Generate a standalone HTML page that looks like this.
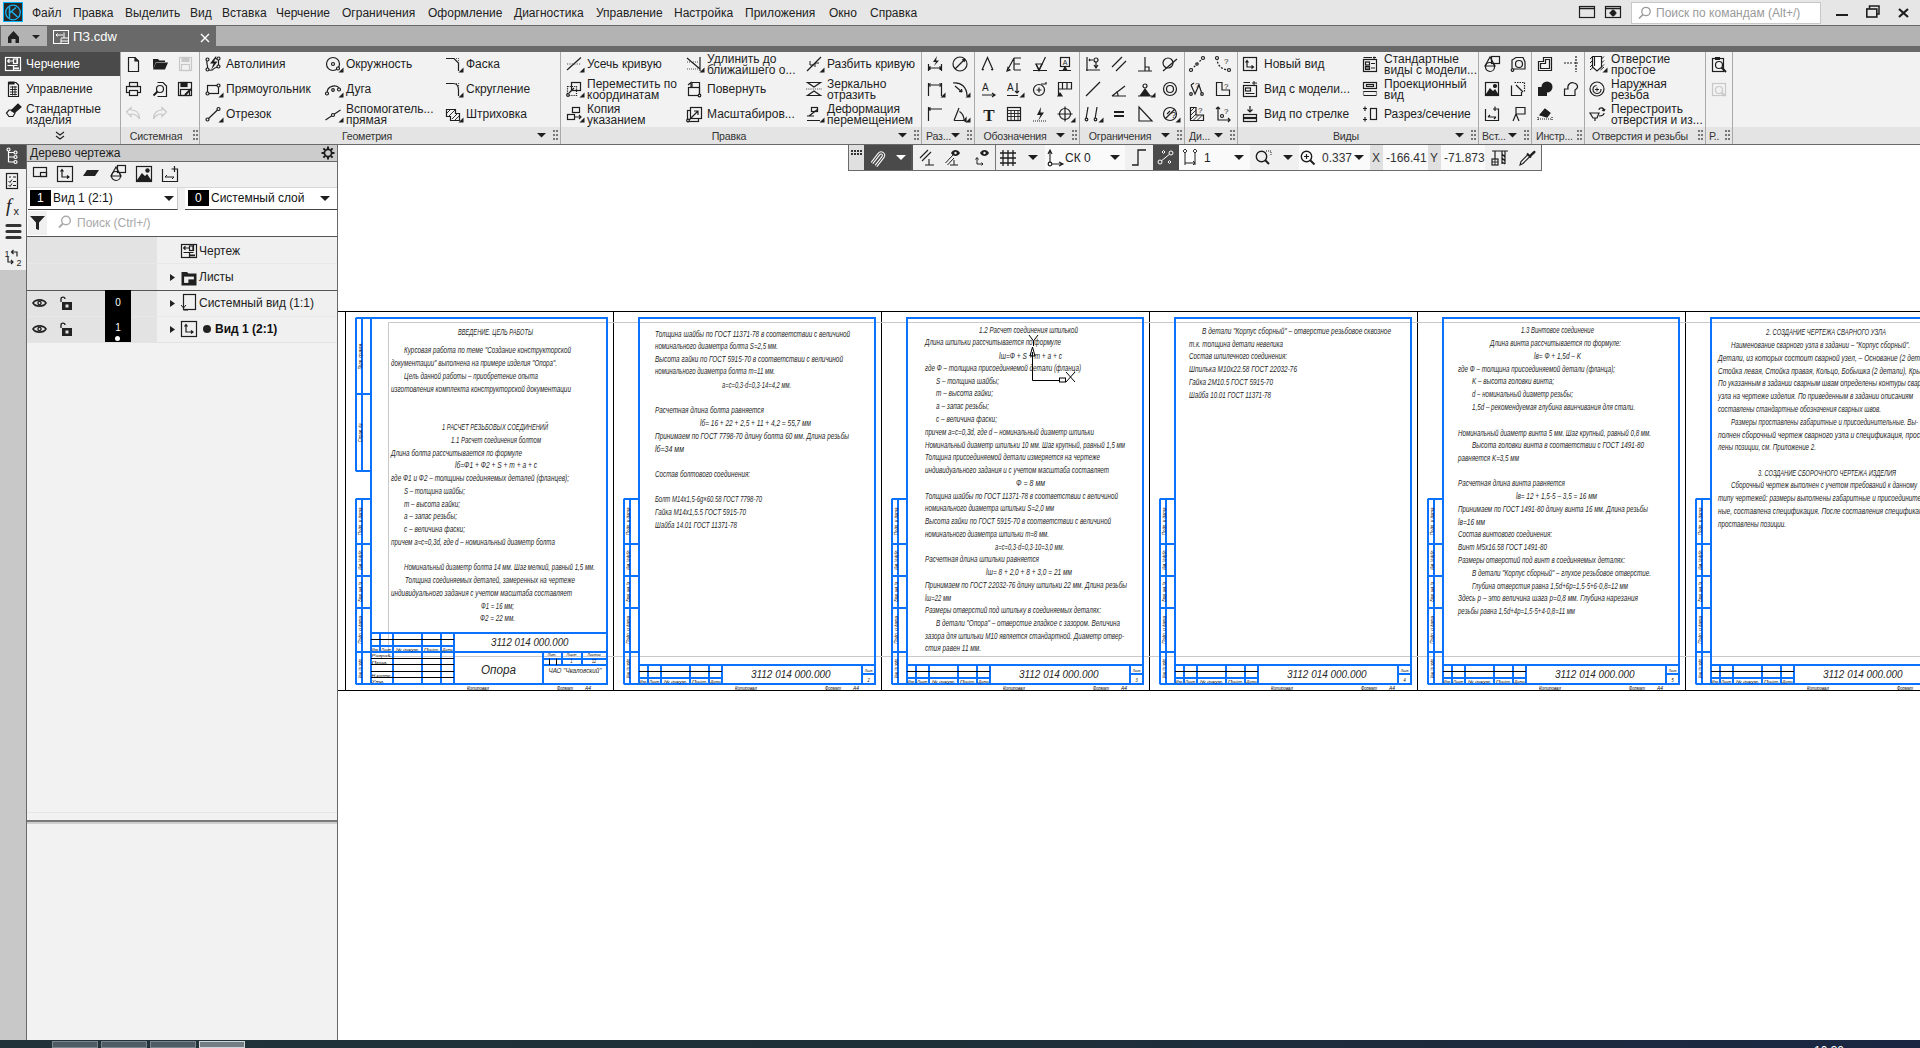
<!DOCTYPE html><html><head><meta charset="utf-8"><title>KOMPAS</title><style>
*{box-sizing:border-box}
html,body{margin:0;padding:0;width:1920px;height:1048px;overflow:hidden;background:#fff;font-family:"Liberation Sans",sans-serif}
.r{position:absolute}
.t{position:absolute;white-space:nowrap;line-height:16px;height:16px}
.i{position:absolute;overflow:visible}
</style></head><body>
<div class="r" style="left:0px;top:0px;width:1920px;height:25px;background:#e6e6e6;"></div>
<svg class="i" style="left:3px;top:2px" width="20" height="20" viewBox="0 0 20 20"><rect x="0" y="0" width="20" height="20" fill="#00b4ff"/><rect x="1" y="1" width="18" height="18" fill="#2b2727"/><circle cx="10" cy="10.5" r="7.3" fill="none" stroke="#18b4f0" stroke-width="1.3"/><path d="M6.5 5 V16 M6.5 11 L13 5.5 M8.5 9.5 L14.5 15" stroke="#18b4f0" stroke-width="1.5" fill="none"/></svg>
<div class="t" style="left:32px;top:5px;font-size:12px;color:#222;font-weight:normal;">Файл</div>
<div class="t" style="left:73px;top:5px;font-size:12px;color:#222;font-weight:normal;">Правка</div>
<div class="t" style="left:125px;top:5px;font-size:12px;color:#222;font-weight:normal;">Выделить</div>
<div class="t" style="left:190px;top:5px;font-size:12px;color:#222;font-weight:normal;">Вид</div>
<div class="t" style="left:222px;top:5px;font-size:12px;color:#222;font-weight:normal;">Вставка</div>
<div class="t" style="left:276px;top:5px;font-size:12px;color:#222;font-weight:normal;">Черчение</div>
<div class="t" style="left:342px;top:5px;font-size:12px;color:#222;font-weight:normal;">Ограничения</div>
<div class="t" style="left:428px;top:5px;font-size:12px;color:#222;font-weight:normal;">Оформление</div>
<div class="t" style="left:514px;top:5px;font-size:12px;color:#222;font-weight:normal;">Диагностика</div>
<div class="t" style="left:596px;top:5px;font-size:12px;color:#222;font-weight:normal;">Управление</div>
<div class="t" style="left:674px;top:5px;font-size:12px;color:#222;font-weight:normal;">Настройка</div>
<div class="t" style="left:745px;top:5px;font-size:12px;color:#222;font-weight:normal;">Приложения</div>
<div class="t" style="left:829px;top:5px;font-size:12px;color:#222;font-weight:normal;">Окно</div>
<div class="t" style="left:870px;top:5px;font-size:12px;color:#222;font-weight:normal;">Справка</div>
<svg class="i" style="left:1579px;top:6px;" width="16" height="12" viewBox="0 0 16 12" fill="none" stroke="#1e1e1e" stroke-width="1.2"><rect x="0.5" y="0.5" width="15" height="11" stroke-width="1.2"/><path d="M0.5 2.5 H15.5" stroke-width="1.5"/></svg>
<svg class="i" style="left:1605px;top:6px;" width="16" height="12" viewBox="0 0 16 12" fill="none" stroke="#1e1e1e" stroke-width="1.2"><rect x="0.5" y="0.5" width="15" height="11" stroke-width="1.2"/><path d="M0.5 2.5 H15.5" stroke-width="1.5"/><circle cx="8" cy="7" r="2.3" fill="#1e1e1e"/><path d="M8 3.5 V10.5 M4.5 7 H11.5" stroke-width="1.3"/></svg>
<div class="r" style="left:1631px;top:2px;width:190px;height:22px;background:#ffffff;border:1px solid #c8c8c8"></div>
<svg class="i" style="left:1638px;top:6px;" width="13" height="14" viewBox="0 0 13 14" fill="none" stroke="#1e1e1e" stroke-width="1.2"><circle cx="8" cy="5.5" r="4.2" stroke="#999" stroke-width="1.3"/><path d="M5 8.5 L1 12.5" stroke="#999" stroke-width="1.6"/></svg>
<div class="t" style="left:1656px;top:5px;font-size:12px;color:#9a9a9a;font-weight:normal;">Поиск по командам (Alt+/)</div>
<div class="r" style="left:1836px;top:14px;width:12px;height:2px;background:#1e1e1e;"></div>
<svg class="i" style="left:1866px;top:5px;" width="14" height="13" viewBox="0 0 14 13" fill="none" stroke="#1e1e1e" stroke-width="1.2"><rect x="0.8" y="4" width="10" height="8" stroke-width="1.6"/><path d="M3.5 4 V1 H13 V9 H11" stroke-width="1.5"/></svg>
<svg class="i" style="left:1898px;top:8px;" width="11" height="10" viewBox="0 0 11 10" fill="none" stroke="#1e1e1e" stroke-width="1.2"><path d="M1 1 L10 9 M10 1 L1 9" stroke-width="2.2"/></svg>
<div class="r" style="left:0px;top:25px;width:1920px;height:27px;background:#696969;"></div>
<div class="r" style="left:216px;top:26px;width:1704px;height:20px;background:#b3b3b3;"></div>
<div class="r" style="left:1px;top:26px;width:46px;height:20px;background:#b3b3b3;"></div>
<svg class="i" style="left:7px;top:30px;" width="13" height="13" viewBox="0 0 13 13" fill="none" stroke="#1e1e1e" stroke-width="1.2"><path d="M1 7 L6.5 1 L12 7 V13 H8.5 V9 H4.5 V13 H1 Z" fill="#222" stroke="none"/></svg>
<svg class="i" style="left:32px;top:35px;" width="8" height="4" viewBox="0 0 8 4" fill="none" stroke="#1e1e1e" stroke-width="1.2"><path d="M0 0 H8 L4 4 Z" fill="#222" stroke="none"/></svg>
<svg class="i" style="left:53px;top:30px;" width="16" height="14" viewBox="0 0 16 14" fill="none" stroke="#1e1e1e" stroke-width="1.2"><rect x="0.5" y="0.5" width="15" height="13" stroke="#fff" stroke-width="1"/><path d="M3 5 H10 M3 5 L4.5 3.5 M3 5 L4.5 6.5 M11 2.5 V8 M8 8 H15 M8 11 H15 M8 8.5 V13.5" stroke="#fff" stroke-width="1"/></svg>
<div class="t" style="left:73px;top:29px;font-size:13px;color:#ffffff;font-weight:normal;">ПЗ.cdw</div>
<svg class="i" style="left:200px;top:33px;" width="10" height="10" viewBox="0 0 10 10" fill="none" stroke="#1e1e1e" stroke-width="1.2"><path d="M1 1 L9 9 M9 1 L1 9" stroke="#fff" stroke-width="1.4"/></svg>
<div class="r" style="left:0px;top:52px;width:1920px;height:75px;background:#f2f2f2;"></div>
<div class="r" style="left:0px;top:127px;width:1920px;height:17px;background:#e4e4e4;"></div>
<div class="r" style="left:0px;top:144px;width:1920px;height:1px;background:#696969;"></div>
<div class="r" style="left:0px;top:52px;width:120px;height:24px;background:#4a4a4a;"></div>
<svg class="i" style="left:5px;top:56px;stroke:#fff" width="16" height="16" viewBox="0 0 16 16" fill="none" stroke="#1e1e1e" stroke-width="1.2"><rect x="0.5" y="1.5" width="15" height="13"/><path d="M2.5 5 H8 M2.5 5 L4.5 3.2 M2.5 5 L4.5 6.8"/><rect x="8.5" y="3" width="3.5" height="4.5"/><path d="M12.5 2 V8 M2.5 9.5 H12.5 M8.5 9.5 V14"/><rect x="9" y="11.5" width="5" height="1.8" fill="#fff" stroke="none"/></svg>
<div class="t" style="left:26px;top:56px;font-size:12px;color:#ffffff;font-weight:normal;">Черчение</div>
<svg class="i" style="left:5px;top:81px;" width="16" height="16" viewBox="0 0 16 16" fill="none" stroke="#1e1e1e" stroke-width="1.2"><path d="M3.5 1.5 H11 L13.5 4 V15.5 H3.5 Z"/><path d="M5 6 H12 M5 8.5 H12 M5 11 H12 M5 13.5 H12 M7.5 5 V14.5 M10 5 V14.5" stroke-width="0.9"/><path d="M4 1 H9 V3 H4 Z" fill="#1e1e1e"/></svg>
<div class="t" style="left:26px;top:81px;font-size:12px;color:#1e1e1e;font-weight:normal;">Управление</div>
<svg class="i" style="left:5px;top:102px;" width="16" height="16" viewBox="0 0 16 16" fill="none" stroke="#1e1e1e" stroke-width="1.2"><path d="M1.5 11 L4 8 H8 L10 11 L8 14.5 H4 Z" fill="#f2f2f2"/><path d="M6 9 L13 2 L16 5 L9 11" fill="#1e1e1e"/></svg>
<div class="t" style="left:26px;top:101px;font-size:12px;color:#1e1e1e;font-weight:normal;">Стандартные</div>
<div class="t" style="left:26px;top:112px;font-size:12px;color:#1e1e1e;font-weight:normal;">изделия</div>
<svg class="i" style="left:55px;top:131px;" width="10" height="9" viewBox="0 0 10 9" fill="none" stroke="#1e1e1e" stroke-width="1.2"><path d="M1 1 L5 4 L9 1 M1 5 L5 8 L9 5" stroke-width="1.1"/></svg>
<div class="r" style="left:120px;top:52px;width:1px;height:92px;background:#a9a9a9;"></div>
<div class="r" style="left:199px;top:52px;width:1px;height:92px;background:#a9a9a9;"></div>
<div class="r" style="left:560px;top:52px;width:1px;height:92px;background:#a9a9a9;"></div>
<div class="r" style="left:921px;top:52px;width:1px;height:92px;background:#a9a9a9;"></div>
<div class="r" style="left:974px;top:52px;width:1px;height:92px;background:#a9a9a9;"></div>
<div class="r" style="left:1079px;top:52px;width:1px;height:92px;background:#a9a9a9;"></div>
<div class="r" style="left:1184px;top:52px;width:1px;height:92px;background:#a9a9a9;"></div>
<div class="r" style="left:1237px;top:52px;width:1px;height:92px;background:#a9a9a9;"></div>
<div class="r" style="left:1478px;top:52px;width:1px;height:92px;background:#a9a9a9;"></div>
<div class="r" style="left:1531px;top:52px;width:1px;height:92px;background:#a9a9a9;"></div>
<div class="r" style="left:1584px;top:52px;width:1px;height:92px;background:#a9a9a9;"></div>
<div class="r" style="left:1705px;top:52px;width:1px;height:92px;background:#a9a9a9;"></div>
<div class="r" style="left:1732px;top:52px;width:1px;height:92px;background:#a9a9a9;"></div>
<svg class="i" style="left:125px;top:56px;" width="16" height="16" viewBox="0 0 16 16" fill="none" stroke="#1e1e1e" stroke-width="1.2"><path d="M3.5 1.5 H10 L13.5 5 V15.5 H3.5 Z"/><path d="M10 1.5 V5 H13.5" fill="#1e1e1e"/></svg>
<svg class="i" style="left:152px;top:56px;" width="16" height="16" viewBox="0 0 16 16" fill="none" stroke="#1e1e1e" stroke-width="1.2"><path d="M1 3 H6 L7.5 4.5 H13 V6 H4 L1 13 Z" fill="#1e1e1e" stroke="none"/><path d="M4 6.5 H16 L13 13.5 H1 Z" fill="#1e1e1e" stroke="none"/></svg>
<svg class="i" style="left:177px;top:56px;" width="16" height="16" viewBox="0 0 16 16" fill="none" stroke="#1e1e1e" stroke-width="1.2"><g stroke="#c8c8c8"><rect x="2.5" y="1.5" width="12" height="13"/><rect x="5" y="1.5" width="7" height="4" fill="#c8c8c8"/><rect x="4.5" y="8.5" width="8" height="6"/></g></svg>
<svg class="i" style="left:125px;top:81px;" width="16" height="16" viewBox="0 0 16 16" fill="none" stroke="#1e1e1e" stroke-width="1.2"><rect x="4.5" y="1.5" width="8" height="4"/><rect x="1.5" y="5.5" width="14" height="6"/><rect x="4.5" y="9.5" width="8" height="5" fill="#f2f2f2"/></svg>
<svg class="i" style="left:152px;top:81px;" width="16" height="16" viewBox="0 0 16 16" fill="none" stroke="#1e1e1e" stroke-width="1.2"><path d="M5.5 1.5 H11 L14.5 5 V15.5 H5.5"/><circle cx="8" cy="8" r="3.5"/><path d="M5.5 10.5 L1.5 14.5" stroke-width="2"/></svg>
<svg class="i" style="left:177px;top:81px;" width="16" height="16" viewBox="0 0 16 16" fill="none" stroke="#1e1e1e" stroke-width="1.2"><rect x="1.5" y="1.5" width="13" height="13"/><rect x="4" y="1.5" width="6" height="4" fill="#1e1e1e"/><rect x="3.5" y="8.5" width="9" height="6"/><path d="M8 14 L14 8" stroke-width="2"/></svg>
<svg class="i" style="left:125px;top:106px;" width="16" height="16" viewBox="0 0 16 16" fill="none" stroke="#1e1e1e" stroke-width="1.2"><path d="M1.5 6 L6 1.5 V4 C11 4 14.5 7 14.5 13 C12.5 9 10 8 6 8 V10.5 Z" stroke="#c8c8c8"/></svg>
<svg class="i" style="left:152px;top:106px;" width="16" height="16" viewBox="0 0 16 16" fill="none" stroke="#1e1e1e" stroke-width="1.2"><path d="M14.5 6 L10 1.5 V4 C5 4 1.5 7 1.5 13 C3.5 9 6 8 10 8 V10.5 Z" stroke="#c8c8c8"/></svg>
<div class="t" style="left:6px;width:300px;top:128px;text-align:center;font-size:10.6px;letter-spacing:-0.2px;color:#333">Системная</div>
<svg class="i" style="left:193px;top:130px;" width="5" height="10" viewBox="0 0 5 10" fill="none" stroke="#1e1e1e" stroke-width="1.2"><g fill="#777" stroke="none"><rect x="0" y="0" width="2" height="2"/><rect x="3" y="0" width="2" height="2"/><rect x="0" y="4" width="2" height="2"/><rect x="3" y="4" width="2" height="2"/><rect x="0" y="8" width="2" height="2"/><rect x="3" y="8" width="2" height="2"/></g></svg>
<svg class="i" style="left:205px;top:56px;" width="16" height="16" viewBox="0 0 16 16" fill="none" stroke="#1e1e1e" stroke-width="1.2"><path d="M2.5 3.5 C1 6 2 8 2.5 10 V13.5 M2.5 13.5 C5 14.5 7 15 8.5 13 C10 11 12 12 13.5 10.5 V4 L10 2" /><circle cx="2.5" cy="3.5" r="1.5" fill="#f2f2f2"/><circle cx="2.5" cy="13.5" r="1.5" fill="#f2f2f2"/><circle cx="13.5" cy="10.5" r="1.5" fill="#f2f2f2"/><circle cx="13.5" cy="2.5" r="1.5" fill="#f2f2f2"/><path d="M10.5 0.5 L5 7.5 H8.5 L6 14 L12.5 5.5 H9 L11.5 0.5 Z" fill="#1e1e1e" stroke="none"/></svg><div class="t" style="left:226px;top:56px;font-size:12px;color:#1e1e1e;font-weight:normal;">Автолиния</div>
<svg class="i" style="left:205px;top:81px;" width="16" height="16" viewBox="0 0 16 16" fill="none" stroke="#1e1e1e" stroke-width="1.2"><rect x="2.5" y="4.5" width="11" height="8"/><circle cx="2.5" cy="12.5" r="1.5" fill="#f2f2f2"/><circle cx="13.5" cy="4.5" r="1.5" fill="#f2f2f2"/><path d="M18.5 11.5 V16.5 H13.5 Z" fill="#1e1e1e" stroke="none"/></svg><div class="t" style="left:226px;top:81px;font-size:12px;color:#1e1e1e;font-weight:normal;">Прямоугольник</div>
<svg class="i" style="left:205px;top:106px;" width="16" height="16" viewBox="0 0 16 16" fill="none" stroke="#1e1e1e" stroke-width="1.2"><path d="M2.5 13.5 L13.5 3"/><circle cx="2.5" cy="13.5" r="1.5" fill="#f2f2f2"/><circle cx="13.5" cy="3" r="1.5" fill="#f2f2f2"/><path d="M18.5 11.5 V16.5 H13.5 Z" fill="#1e1e1e" stroke="none"/></svg><div class="t" style="left:226px;top:106px;font-size:12px;color:#1e1e1e;font-weight:normal;">Отрезок</div>
<svg class="i" style="left:325px;top:56px;" width="16" height="16" viewBox="0 0 16 16" fill="none" stroke="#1e1e1e" stroke-width="1.2"><circle cx="8" cy="8" r="6.5"/><circle cx="8" cy="8" r="1.5"/><circle cx="13" cy="12.5" r="1.5" fill="#f2f2f2"/><path d="M18.5 11.5 V16.5 H13.5 Z" fill="#1e1e1e" stroke="none"/></svg><div class="t" style="left:346px;top:56px;font-size:12px;color:#1e1e1e;font-weight:normal;">Окружность</div>
<svg class="i" style="left:325px;top:81px;" width="16" height="16" viewBox="0 0 16 16" fill="none" stroke="#1e1e1e" stroke-width="1.2"><path d="M2 12 C2 4 13 3 14.5 8"/><circle cx="8" cy="9" r="1.3"/><circle cx="2" cy="12.5" r="1.5" fill="#f2f2f2"/><circle cx="14" cy="8.5" r="1.5" fill="#f2f2f2"/><path d="M18.5 11.5 V16.5 H13.5 Z" fill="#1e1e1e" stroke="none"/></svg><div class="t" style="left:346px;top:81px;font-size:12px;color:#1e1e1e;font-weight:normal;">Дуга</div>
<svg class="i" style="left:325px;top:106px;" width="16" height="16" viewBox="0 0 16 16" fill="none" stroke="#1e1e1e" stroke-width="1.2"><path d="M0.5 14 L15.5 4"/><circle cx="8" cy="9" r="1.5" fill="#f2f2f2"/><path d="M18.5 11.5 V16.5 H13.5 Z" fill="#1e1e1e" stroke="none"/></svg><div class="t" style="left:346px;top:101px;font-size:12px;color:#1e1e1e;font-weight:normal;">Вспомогатель...</div><div class="t" style="left:346px;top:111.5px;font-size:12px;color:#1e1e1e;font-weight:normal;">прямая</div>
<svg class="i" style="left:445px;top:56px;" width="16" height="16" viewBox="0 0 16 16" fill="none" stroke="#1e1e1e" stroke-width="1.2"><path d="M1 2.5 H9 L13.5 7 V15" /><path d="M9 2.5 H13.5 V7" stroke-dasharray="1 1" stroke="#555"/><path d="M18.5 11.5 V16.5 H13.5 Z" fill="#1e1e1e" stroke="none"/></svg><div class="t" style="left:466px;top:56px;font-size:12px;color:#1e1e1e;font-weight:normal;">Фаска</div>
<svg class="i" style="left:445px;top:81px;" width="16" height="16" viewBox="0 0 16 16" fill="none" stroke="#1e1e1e" stroke-width="1.2"><path d="M1 2.5 H8 C11.5 2.5 13.5 5 13.5 9 V15"/><path d="M9 2.5 H13.5 V7" stroke-dasharray="1 1" stroke="#555"/><path d="M18.5 11.5 V16.5 H13.5 Z" fill="#1e1e1e" stroke="none"/></svg><div class="t" style="left:466px;top:81px;font-size:12px;color:#1e1e1e;font-weight:normal;">Скругление</div>
<svg class="i" style="left:445px;top:106px;" width="16" height="16" viewBox="0 0 16 16" fill="none" stroke="#1e1e1e" stroke-width="1.2"><path d="M1.5 3.5 H10.5 V7.5 H14.5 V14.5 H5.5 V10.5 H1.5 Z"/><path d="M2 7 L6 3 M4 10 L10 4 M7 13 L13 7 M10 14 L14 10" stroke-width="0.9"/><path d="M18.5 11.5 V16.5 H13.5 Z" fill="#1e1e1e" stroke="none"/></svg><div class="t" style="left:466px;top:106px;font-size:12px;color:#1e1e1e;font-weight:normal;">Штриховка</div>
<div class="t" style="left:217px;width:300px;top:128px;text-align:center;font-size:10.6px;letter-spacing:-0.2px;color:#333">Геометрия</div>
<svg class="i" style="left:537px;top:133px;" width="9" height="5" viewBox="0 0 9 5" fill="none" stroke="#1e1e1e" stroke-width="1.2"><path d="M0 0 H9 L4.5 4.5 Z" fill="#1e1e1e" stroke="none"/></svg>
<svg class="i" style="left:553px;top:130px;" width="5" height="10" viewBox="0 0 5 10" fill="none" stroke="#1e1e1e" stroke-width="1.2"><g fill="#777" stroke="none"><rect x="0" y="0" width="2" height="2"/><rect x="3" y="0" width="2" height="2"/><rect x="0" y="4" width="2" height="2"/><rect x="3" y="4" width="2" height="2"/><rect x="0" y="8" width="2" height="2"/><rect x="3" y="8" width="2" height="2"/></g></svg>
<svg class="i" style="left:566px;top:56px;" width="16" height="16" viewBox="0 0 16 16" fill="none" stroke="#1e1e1e" stroke-width="1.2"><path d="M1 14 L15 1.5"/><path d="M1 8 H15" stroke-dasharray="1.2 1.2" stroke="#555"/><path d="M18.5 11.5 V16.5 H13.5 Z" fill="#1e1e1e" stroke="none"/></svg><div class="t" style="left:587px;top:56px;font-size:12px;color:#1e1e1e;font-weight:normal;">Усечь кривую</div>
<svg class="i" style="left:566px;top:81px;" width="16" height="16" viewBox="0 0 16 16" fill="none" stroke="#1e1e1e" stroke-width="1.2"><rect x="5.5" y="1.5" width="9" height="8"/><rect x="1.5" y="5.5" width="9" height="9" stroke-dasharray="1.2 1"/><circle cx="2" cy="14" r="1.3" fill="#f2f2f2"/><path d="M3 12 L8 7"/><path d="M18.5 11.5 V16.5 H13.5 Z" fill="#1e1e1e" stroke="none"/></svg><div class="t" style="left:587px;top:76px;font-size:12px;color:#1e1e1e;font-weight:normal;">Переместить по</div><div class="t" style="left:587px;top:86.5px;font-size:12px;color:#1e1e1e;font-weight:normal;">координатам</div>
<svg class="i" style="left:566px;top:106px;" width="16" height="16" viewBox="0 0 16 16" fill="none" stroke="#1e1e1e" stroke-width="1.2"><rect x="6.5" y="1.5" width="7" height="5"/><rect x="1.5" y="8.5" width="7" height="5"/><path d="M8.5 11 H15 M13 9 L15 11 L13 13"/><path d="M18.5 11.5 V16.5 H13.5 Z" fill="#1e1e1e" stroke="none"/></svg><div class="t" style="left:587px;top:101px;font-size:12px;color:#1e1e1e;font-weight:normal;">Копия</div><div class="t" style="left:587px;top:111.5px;font-size:12px;color:#1e1e1e;font-weight:normal;">указанием</div>
<svg class="i" style="left:686px;top:56px;" width="16" height="16" viewBox="0 0 16 16" fill="none" stroke="#1e1e1e" stroke-width="1.2"><path d="M14 1 V15 M1 2 L14 13"/><path d="M1 6 H13 M1 13 H13" stroke-dasharray="1 1" stroke="#555"/><path d="M18.5 11.5 V16.5 H13.5 Z" fill="#1e1e1e" stroke="none"/></svg><div class="t" style="left:707px;top:51px;font-size:12px;color:#1e1e1e;font-weight:normal;">Удлинить до</div><div class="t" style="left:707px;top:61.5px;font-size:12px;color:#1e1e1e;font-weight:normal;">ближайшего о...</div>
<svg class="i" style="left:686px;top:81px;" width="16" height="16" viewBox="0 0 16 16" fill="none" stroke="#1e1e1e" stroke-width="1.2"><rect x="2.5" y="6.5" width="11" height="8"/><path d="M6 6.5 V1.5 H13.5 V14.5" /><path d="M2 4 L5 1.5 L5 6" /><circle cx="13.5" cy="14.5" r="1.3" fill="#f2f2f2"/></svg><div class="t" style="left:707px;top:81px;font-size:12px;color:#1e1e1e;font-weight:normal;">Повернуть</div>
<svg class="i" style="left:686px;top:106px;" width="16" height="16" viewBox="0 0 16 16" fill="none" stroke="#1e1e1e" stroke-width="1.2"><rect x="1.5" y="4.5" width="11" height="11"/><rect x="4.5" y="1.5" width="11" height="11" fill="#f2f2f2"/><path d="M3 14 L12 5 M8 5 H12 V9"/><circle cx="2" cy="14.5" r="1.3" fill="#f2f2f2"/></svg><div class="t" style="left:707px;top:106px;font-size:12px;color:#1e1e1e;font-weight:normal;">Масштабиров...</div>
<svg class="i" style="left:806px;top:56px;" width="16" height="16" viewBox="0 0 16 16" fill="none" stroke="#1e1e1e" stroke-width="1.2"><path d="M1 15 L15 1"/><path d="M4 5 V9 H8 M9 11 V7 H13" stroke-width="1"/><path d="M18.5 11.5 V16.5 H13.5 Z" fill="#1e1e1e" stroke="none"/></svg><div class="t" style="left:827px;top:56px;font-size:12px;color:#1e1e1e;font-weight:normal;">Разбить кривую</div>
<svg class="i" style="left:806px;top:81px;" width="16" height="16" viewBox="0 0 16 16" fill="none" stroke="#1e1e1e" stroke-width="1.2"><path d="M1.5 1.5 H14.5 L8 6 Z M1.5 14.5 H14.5 L8 10 Z"/><path d="M0 8 H16" stroke-dasharray="1.2 1" stroke="#555"/></svg><div class="t" style="left:827px;top:76px;font-size:12px;color:#1e1e1e;font-weight:normal;">Зеркально</div><div class="t" style="left:827px;top:86.5px;font-size:12px;color:#1e1e1e;font-weight:normal;">отразить</div>
<svg class="i" style="left:806px;top:106px;" width="16" height="16" viewBox="0 0 16 16" fill="none" stroke="#1e1e1e" stroke-width="1.2"><rect x="5.5" y="1.5" width="6" height="4"/><path d="M1 14.5 H14 M1 10 H8 M3 10 L12 3"/><path d="M18.5 11.5 V16.5 H13.5 Z" fill="#1e1e1e" stroke="none"/></svg><div class="t" style="left:827px;top:101px;font-size:12px;color:#1e1e1e;font-weight:normal;">Деформация</div><div class="t" style="left:827px;top:111.5px;font-size:12px;color:#1e1e1e;font-weight:normal;">перемещением</div>
<div class="t" style="left:579px;width:300px;top:128px;text-align:center;font-size:10.6px;letter-spacing:-0.2px;color:#333">Правка</div>
<svg class="i" style="left:898px;top:133px;" width="9" height="5" viewBox="0 0 9 5" fill="none" stroke="#1e1e1e" stroke-width="1.2"><path d="M0 0 H9 L4.5 4.5 Z" fill="#1e1e1e" stroke="none"/></svg>
<svg class="i" style="left:914px;top:130px;" width="5" height="10" viewBox="0 0 5 10" fill="none" stroke="#1e1e1e" stroke-width="1.2"><g fill="#777" stroke="none"><rect x="0" y="0" width="2" height="2"/><rect x="3" y="0" width="2" height="2"/><rect x="0" y="4" width="2" height="2"/><rect x="3" y="4" width="2" height="2"/><rect x="0" y="8" width="2" height="2"/><rect x="3" y="8" width="2" height="2"/></g></svg>
<svg class="i" style="left:927px;top:56px;" width="16" height="16" viewBox="0 0 16 16" fill="none" stroke="#1e1e1e" stroke-width="1.2"><path d="M1.5 8 V15 M14.5 8 V15 M1.5 12 H14.5 M1.5 12 L3.5 10.5 M1.5 12 L3.5 13.5 M14.5 12 L12.5 10.5 M14.5 12 L12.5 13.5"/><path d="M10 0 L6 6 H9 L7 10 L12 4.5 H9 Z" fill="#1e1e1e" stroke="none"/></svg>
<svg class="i" style="left:952px;top:56px;" width="16" height="16" viewBox="0 0 16 16" fill="none" stroke="#1e1e1e" stroke-width="1.2"><circle cx="8" cy="8" r="7"/><path d="M3 13 L13 3" /><path d="M13 3 L10 4 M13 3 L12 6"/></svg>
<svg class="i" style="left:927px;top:81px;" width="16" height="16" viewBox="0 0 16 16" fill="none" stroke="#1e1e1e" stroke-width="1.2"><path d="M1.5 15 V2 M14.5 15 V2 M1.5 4 H14.5"/><path d="M1.5 4 L3.5 2.5 M1.5 4 L3.5 5.5 M14.5 4 L12.5 2.5 M14.5 4 L12.5 5.5"/><path d="M18.5 11.5 V16.5 H13.5 Z" fill="#1e1e1e" stroke="none"/></svg>
<svg class="i" style="left:952px;top:81px;" width="16" height="16" viewBox="0 0 16 16" fill="none" stroke="#1e1e1e" stroke-width="1.2"><path d="M1 2 C9 1 15 6 15 15"/><path d="M3 5 L10 11 M10 11 L7 10.5 M10 11 L9.5 8"/><path d="M18.5 11.5 V16.5 H13.5 Z" fill="#1e1e1e" stroke="none"/></svg>
<svg class="i" style="left:927px;top:106px;" width="16" height="16" viewBox="0 0 16 16" fill="none" stroke="#1e1e1e" stroke-width="1.2"><path d="M1.5 15 V1 M1.5 3 H15 M1.5 3 L3.5 1.5 M1.5 3 L3.5 4.5"/></svg>
<svg class="i" style="left:952px;top:106px;" width="16" height="16" viewBox="0 0 16 16" fill="none" stroke="#1e1e1e" stroke-width="1.2"><path d="M2 14.5 L7 2 M2 14.5 H12 C12 10 10 7 7.5 5.5"/><path d="M12 14.5 L14 12 V15.5 Z" fill="#1e1e1e"/><path d="M18.5 11.5 V16.5 H13.5 Z" fill="#1e1e1e" stroke="none"/></svg>
<div class="t" style="left:926px;top:128px;font-size:10.6px;color:#333;font-weight:normal;letter-spacing:-0.2px">Раз...</div>
<svg class="i" style="left:951px;top:133px;" width="9" height="5" viewBox="0 0 9 5" fill="none" stroke="#1e1e1e" stroke-width="1.2"><path d="M0 0 H9 L4.5 4.5 Z" fill="#1e1e1e" stroke="none"/></svg>
<svg class="i" style="left:967px;top:130px;" width="5" height="10" viewBox="0 0 5 10" fill="none" stroke="#1e1e1e" stroke-width="1.2"><g fill="#777" stroke="none"><rect x="0" y="0" width="2" height="2"/><rect x="3" y="0" width="2" height="2"/><rect x="0" y="4" width="2" height="2"/><rect x="3" y="4" width="2" height="2"/><rect x="0" y="8" width="2" height="2"/><rect x="3" y="8" width="2" height="2"/></g></svg>
<svg class="i" style="left:981px;top:56px;" width="16" height="16" viewBox="0 0 16 16" fill="none" stroke="#1e1e1e" stroke-width="1.2"><path d="M1 14 L6.5 1.5 L12 14 M1 14 L3 13.5 M12 14 L10 13.5"/></svg>
<svg class="i" style="left:1006px;top:56px;" width="16" height="16" viewBox="0 0 16 16" fill="none" stroke="#1e1e1e" stroke-width="1.2"><path d="M1 15 L8 2 M8 2 H15 M8 8 H14 M8 14 H15 M8 2 V14 M1 15 L2 11.5 L4 14 Z"/></svg>
<svg class="i" style="left:1032px;top:56px;" width="16" height="16" viewBox="0 0 16 16" fill="none" stroke="#1e1e1e" stroke-width="1.2"><path d="M1 14.5 H15 M4 8 L7 14.5 L13.5 1"/><path d="M4 8 H10 L7 14 Z"/></svg>
<svg class="i" style="left:1057px;top:56px;" width="16" height="16" viewBox="0 0 16 16" fill="none" stroke="#1e1e1e" stroke-width="1.2"><rect x="3.5" y="1.5" width="9" height="9"/><path d="M8 10.5 V14 M2 14.5 H14"/><path d="M6 14.5 L8 11 L10 14.5 Z" fill="#1e1e1e"/><text x="8" y="9" font-size="7" text-anchor="middle" fill="#1e1e1e" stroke="none" font-family="Liberation Sans">A</text></svg>
<svg class="i" style="left:981px;top:81px;" width="16" height="16" viewBox="0 0 16 16" fill="none" stroke="#1e1e1e" stroke-width="1.2"><text x="1" y="10" font-size="10" fill="#1e1e1e" stroke="none" font-family="Liberation Sans">A</text><path d="M1 14 H14 M11 12 L14 14 L11 16"/></svg>
<svg class="i" style="left:1006px;top:81px;" width="16" height="16" viewBox="0 0 16 16" fill="none" stroke="#1e1e1e" stroke-width="1.2"><text x="1" y="10" font-size="10" fill="#1e1e1e" stroke="none" font-family="Liberation Sans">A</text><path d="M11 2 V12 M9 10 L11 12 L13 10 M1 14.5 H12" /><path d="M18.5 11.5 V16.5 H13.5 Z" fill="#1e1e1e" stroke="none"/></svg>
<svg class="i" style="left:1032px;top:81px;" width="16" height="16" viewBox="0 0 16 16" fill="none" stroke="#1e1e1e" stroke-width="1.2"><circle cx="7" cy="9" r="5.5"/><path d="M4.5 9 H9.5 M7 6.5 V11.5 M9 3 H14 V1" /></svg>
<svg class="i" style="left:1057px;top:81px;" width="16" height="16" viewBox="0 0 16 16" fill="none" stroke="#1e1e1e" stroke-width="1.2"><path d="M1.5 15 V1.5 H14.5 V8 H1.5 M5.5 1.5 V8 M10 1.5 V8"/><path d="M1 15 L3 12 L5 15 Z" fill="#1e1e1e"/></svg>
<svg class="i" style="left:981px;top:106px;" width="16" height="16" viewBox="0 0 16 16" fill="none" stroke="#1e1e1e" stroke-width="1.2"><text x="8" y="15" font-size="17" text-anchor="middle" fill="#1e1e1e" stroke="none" font-family="Liberation Serif" font-weight="bold">T</text></svg>
<svg class="i" style="left:1006px;top:106px;" width="16" height="16" viewBox="0 0 16 16" fill="none" stroke="#1e1e1e" stroke-width="1.2"><rect x="1.5" y="1.5" width="13" height="13"/><path d="M1.5 4.5 H14.5 M1.5 7.5 H14.5 M1.5 10.5 H14.5 M5 4.5 V14.5 M8.5 4.5 V14.5 M12 4.5 V14.5" stroke-width="0.9"/></svg>
<svg class="i" style="left:1032px;top:106px;" width="16" height="16" viewBox="0 0 16 16" fill="none" stroke="#1e1e1e" stroke-width="1.2"><path d="M9 1 L5 9 H8.5 L6 15 L12 6.5 H8.5 Z" fill="#1e1e1e" stroke="none"/><path d="M1 15 H15" stroke-dasharray="1 1"/></svg>
<svg class="i" style="left:1057px;top:106px;" width="16" height="16" viewBox="0 0 16 16" fill="none" stroke="#1e1e1e" stroke-width="1.2"><circle cx="8" cy="8" r="5.5"/><path d="M8 0.5 V15.5 M0.5 8 H15.5"/><path d="M18.5 11.5 V16.5 H13.5 Z" fill="#1e1e1e" stroke="none"/></svg>
<div class="t" style="left:865px;width:300px;top:128px;text-align:center;font-size:10.6px;letter-spacing:-0.2px;color:#333">Обозначения</div>
<svg class="i" style="left:1056px;top:133px;" width="9" height="5" viewBox="0 0 9 5" fill="none" stroke="#1e1e1e" stroke-width="1.2"><path d="M0 0 H9 L4.5 4.5 Z" fill="#1e1e1e" stroke="none"/></svg>
<svg class="i" style="left:1072px;top:130px;" width="5" height="10" viewBox="0 0 5 10" fill="none" stroke="#1e1e1e" stroke-width="1.2"><g fill="#777" stroke="none"><rect x="0" y="0" width="2" height="2"/><rect x="3" y="0" width="2" height="2"/><rect x="0" y="4" width="2" height="2"/><rect x="3" y="4" width="2" height="2"/><rect x="0" y="8" width="2" height="2"/><rect x="3" y="8" width="2" height="2"/></g></svg>
<svg class="i" style="left:1085px;top:56px;" width="16" height="16" viewBox="0 0 16 16" fill="none" stroke="#1e1e1e" stroke-width="1.2"><path d="M2 1 V15 M1 14 H15"/><circle cx="11" cy="4" r="2"/><path d="M9 9 L11 12 L13 9 M11 12 V6"/><path d="M4 4 H8 M4 4 L5 3 M4 4 L5 5"/></svg>
<svg class="i" style="left:1111px;top:56px;" width="16" height="16" viewBox="0 0 16 16" fill="none" stroke="#1e1e1e" stroke-width="1.2"><path d="M1 11 L11 1 M5 15 L15 5"/></svg>
<svg class="i" style="left:1137px;top:56px;" width="16" height="16" viewBox="0 0 16 16" fill="none" stroke="#1e1e1e" stroke-width="1.2"><path d="M8 1 V15 M1 15 H15 M8 11 H12 V15"/></svg>
<svg class="i" style="left:1162px;top:56px;" width="16" height="16" viewBox="0 0 16 16" fill="none" stroke="#1e1e1e" stroke-width="1.2"><circle cx="6" cy="7" r="5"/><path d="M1 15 L15 3"/></svg>
<svg class="i" style="left:1085px;top:81px;" width="16" height="16" viewBox="0 0 16 16" fill="none" stroke="#1e1e1e" stroke-width="1.2"><path d="M1 15 L15 1"/></svg>
<svg class="i" style="left:1111px;top:81px;" width="16" height="16" viewBox="0 0 16 16" fill="none" stroke="#1e1e1e" stroke-width="1.2"><path d="M1 15 H15 M1 15 L14 5 M7 15 C7 12 6 11 5 11"/></svg>
<svg class="i" style="left:1137px;top:81px;" width="16" height="16" viewBox="0 0 16 16" fill="none" stroke="#1e1e1e" stroke-width="1.2"><path d="M1 15 H15 M3 15 L8 8 L13 15 Z" fill="#1e1e1e"/><circle cx="8" cy="5" r="2"/><path d="M18.5 11.5 V16.5 H13.5 Z" fill="#1e1e1e" stroke="none"/></svg>
<svg class="i" style="left:1162px;top:81px;" width="16" height="16" viewBox="0 0 16 16" fill="none" stroke="#1e1e1e" stroke-width="1.2"><circle cx="8" cy="8" r="6.5"/><circle cx="8" cy="8" r="3.5"/></svg>
<svg class="i" style="left:1085px;top:106px;" width="16" height="16" viewBox="0 0 16 16" fill="none" stroke="#1e1e1e" stroke-width="1.2"><path d="M3 1 L1 13 M12 1 L10 13"/><circle cx="1.5" cy="13.5" r="1.3" fill="#f2f2f2"/><circle cx="10.5" cy="13.5" r="1.3" fill="#f2f2f2"/><path d="M18.5 11.5 V16.5 H13.5 Z" fill="#1e1e1e" stroke="none"/></svg>
<svg class="i" style="left:1111px;top:106px;" width="16" height="16" viewBox="0 0 16 16" fill="none" stroke="#1e1e1e" stroke-width="1.2"><path d="M3 6 H13 M3 10 H13" stroke-width="2.2"/></svg>
<svg class="i" style="left:1137px;top:106px;" width="16" height="16" viewBox="0 0 16 16" fill="none" stroke="#1e1e1e" stroke-width="1.2"><path d="M2 1 V15 H15 Z"/></svg>
<svg class="i" style="left:1162px;top:106px;" width="16" height="16" viewBox="0 0 16 16" fill="none" stroke="#1e1e1e" stroke-width="1.2"><circle cx="8" cy="8" r="6.5"/><path d="M3 13 L13 3 M5 8 L8 5"/><text x="9" y="12" font-size="9" fill="#1e1e1e" stroke="none" font-family="Liberation Sans">?</text><path d="M18.5 11.5 V16.5 H13.5 Z" fill="#1e1e1e" stroke="none"/></svg>
<div class="t" style="left:970px;width:300px;top:128px;text-align:center;font-size:10.6px;letter-spacing:-0.2px;color:#333">Ограничения</div>
<svg class="i" style="left:1161px;top:133px;" width="9" height="5" viewBox="0 0 9 5" fill="none" stroke="#1e1e1e" stroke-width="1.2"><path d="M0 0 H9 L4.5 4.5 Z" fill="#1e1e1e" stroke="none"/></svg>
<svg class="i" style="left:1177px;top:130px;" width="5" height="10" viewBox="0 0 5 10" fill="none" stroke="#1e1e1e" stroke-width="1.2"><g fill="#777" stroke="none"><rect x="0" y="0" width="2" height="2"/><rect x="3" y="0" width="2" height="2"/><rect x="0" y="4" width="2" height="2"/><rect x="3" y="4" width="2" height="2"/><rect x="0" y="8" width="2" height="2"/><rect x="3" y="8" width="2" height="2"/></g></svg>
<svg class="i" style="left:1189px;top:56px;" width="16" height="16" viewBox="0 0 16 16" fill="none" stroke="#1e1e1e" stroke-width="1.2"><path d="M2 14 L14 2" stroke-dasharray="2 2"/><circle cx="2" cy="14" r="1.5" fill="#f2f2f2"/><circle cx="14" cy="2" r="1.5" fill="#f2f2f2"/><circle cx="8" cy="8" r="1.2" fill="#f2f2f2"/></svg>
<svg class="i" style="left:1215px;top:56px;" width="16" height="16" viewBox="0 0 16 16" fill="none" stroke="#1e1e1e" stroke-width="1.2"><path d="M2 2 C2 12 10 14 14 14" stroke-dasharray="2 1.5"/><circle cx="2" cy="2" r="1.5" fill="#f2f2f2"/><circle cx="14" cy="14" r="1.5" fill="#f2f2f2"/><text x="9" y="8" font-size="8" fill="#1e1e1e" stroke="none" font-family="Liberation Sans">?</text></svg>
<svg class="i" style="left:1189px;top:81px;" width="16" height="16" viewBox="0 0 16 16" fill="none" stroke="#1e1e1e" stroke-width="1.2"><path d="M2 4 L6 13 L10 4 L13 13 M2 4 L5 2" /><circle cx="2" cy="13" r="1.3" fill="#f2f2f2"/><circle cx="13" cy="13" r="1.3" fill="#f2f2f2"/><text x="6" y="7" font-size="8" fill="#1e1e1e" stroke="none" font-family="Liberation Sans">?</text></svg>
<svg class="i" style="left:1215px;top:81px;" width="16" height="16" viewBox="0 0 16 16" fill="none" stroke="#1e1e1e" stroke-width="1.2"><path d="M1.5 1.5 V14.5 H14.5 V9 H7 V1.5 Z"/><text x="9" y="8" font-size="8" fill="#1e1e1e" stroke="none" font-family="Liberation Sans">?</text></svg>
<svg class="i" style="left:1189px;top:106px;" width="16" height="16" viewBox="0 0 16 16" fill="none" stroke="#1e1e1e" stroke-width="1.2"><path d="M1.5 1.5 V14.5 H14.5 V9 H7 V1.5 Z"/><path d="M2 5 L5.5 1.5 M2 9 L7 4 M2 13 L7 8 M4 14.5 L9.5 9 M8 14.5 L13.5 9" stroke-width="0.9"/><text x="9" y="7" font-size="8" fill="#1e1e1e" stroke="none" font-family="Liberation Sans">?</text></svg>
<svg class="i" style="left:1215px;top:106px;" width="16" height="16" viewBox="0 0 16 16" fill="none" stroke="#1e1e1e" stroke-width="1.2"><path d="M3 1 V14 H15 M1 3 L3 1 L5 3 M13 12 L15 14 L13 16"/><circle cx="7" cy="10" r="1.5"/><text x="9" y="8" font-size="8" fill="#1e1e1e" stroke="none" font-family="Liberation Sans">?</text></svg>
<div class="t" style="left:1189px;top:128px;font-size:10.6px;color:#333;font-weight:normal;letter-spacing:-0.2px">Ди...</div>
<svg class="i" style="left:1214px;top:133px;" width="9" height="5" viewBox="0 0 9 5" fill="none" stroke="#1e1e1e" stroke-width="1.2"><path d="M0 0 H9 L4.5 4.5 Z" fill="#1e1e1e" stroke="none"/></svg>
<svg class="i" style="left:1230px;top:130px;" width="5" height="10" viewBox="0 0 5 10" fill="none" stroke="#1e1e1e" stroke-width="1.2"><g fill="#777" stroke="none"><rect x="0" y="0" width="2" height="2"/><rect x="3" y="0" width="2" height="2"/><rect x="0" y="4" width="2" height="2"/><rect x="3" y="4" width="2" height="2"/><rect x="0" y="8" width="2" height="2"/><rect x="3" y="8" width="2" height="2"/></g></svg>
<svg class="i" style="left:1242px;top:56px;" width="16" height="16" viewBox="0 0 16 16" fill="none" stroke="#1e1e1e" stroke-width="1.2"><rect x="1.5" y="1.5" width="13" height="13"/><path d="M5 5 V11 H11 M3.5 6.5 L5 4.5 L6.5 6.5 M9.5 9.5 L11.5 11 L9.5 12.5"/></svg><div class="t" style="left:1264px;top:56px;font-size:12px;color:#1e1e1e;font-weight:normal;">Новый вид</div>
<svg class="i" style="left:1242px;top:81px;" width="16" height="16" viewBox="0 0 16 16" fill="none" stroke="#1e1e1e" stroke-width="1.2"><rect x="1.5" y="4.5" width="13" height="11"/><rect x="3.5" y="7" width="5" height="3"/><path d="M3.5 12.5 H12.5 M1.5 1.5 H8 M12 0 V5 M10 2 H15" stroke-width="1"/></svg><div class="t" style="left:1264px;top:81px;font-size:12px;color:#1e1e1e;font-weight:normal;">Вид с модели...</div>
<svg class="i" style="left:1242px;top:106px;" width="16" height="16" viewBox="0 0 16 16" fill="none" stroke="#1e1e1e" stroke-width="1.2"><path d="M8 0 V6 M5.5 3.5 L8 6 L10.5 3.5"/><rect x="1.5" y="8.5" width="13" height="3"/><rect x="1.5" y="12.5" width="13" height="3"/></svg><div class="t" style="left:1264px;top:106px;font-size:12px;color:#1e1e1e;font-weight:normal;">Вид по стрелке</div>
<svg class="i" style="left:1362px;top:56px;" width="16" height="16" viewBox="0 0 16 16" fill="none" stroke="#1e1e1e" stroke-width="1.2"><rect x="1.5" y="3.5" width="13" height="12"/><path d="M1.5 1.5 H10 M12 0.5 V4 M14 1.5 H11" stroke-width="1"/><rect x="3.5" y="6" width="4" height="3"/><path d="M9 7.5 H13 M3.5 12 H7.5 M9 12 H13" /><rect x="3.5" y="10.5" width="4" height="3"/></svg><div class="t" style="left:1384px;top:51px;font-size:12px;color:#1e1e1e;font-weight:normal;">Стандартные</div><div class="t" style="left:1384px;top:61.5px;font-size:12px;color:#1e1e1e;font-weight:normal;">виды с модели...</div>
<svg class="i" style="left:1362px;top:81px;" width="16" height="16" viewBox="0 0 16 16" fill="none" stroke="#1e1e1e" stroke-width="1.2"><rect x="1.5" y="1.5" width="13" height="6"/><rect x="4.5" y="3.5" width="7" height="2"/><path d="M1.5 10.5 H14.5 M1.5 14.5 H14.5" /><path d="M1.5 10.5 V14.5 M14.5 10.5 V14.5" stroke-dasharray="1 1"/></svg><div class="t" style="left:1384px;top:76px;font-size:12px;color:#1e1e1e;font-weight:normal;">Проекционный</div><div class="t" style="left:1384px;top:86.5px;font-size:12px;color:#1e1e1e;font-weight:normal;">вид</div>
<svg class="i" style="left:1362px;top:106px;" width="16" height="16" viewBox="0 0 16 16" fill="none" stroke="#1e1e1e" stroke-width="1.2"><path d="M1 2.5 H5 M3 0.5 V5 M1 13.5 H5 M3 11 V15.5"/><rect x="8.5" y="2.5" width="6" height="11"/></svg><div class="t" style="left:1384px;top:106px;font-size:12px;color:#1e1e1e;font-weight:normal;">Разрез/сечение</div>
<div class="t" style="left:1196px;width:300px;top:128px;text-align:center;font-size:10.6px;letter-spacing:-0.2px;color:#333">Виды</div>
<svg class="i" style="left:1455px;top:133px;" width="9" height="5" viewBox="0 0 9 5" fill="none" stroke="#1e1e1e" stroke-width="1.2"><path d="M0 0 H9 L4.5 4.5 Z" fill="#1e1e1e" stroke="none"/></svg>
<svg class="i" style="left:1471px;top:130px;" width="5" height="10" viewBox="0 0 5 10" fill="none" stroke="#1e1e1e" stroke-width="1.2"><g fill="#777" stroke="none"><rect x="0" y="0" width="2" height="2"/><rect x="3" y="0" width="2" height="2"/><rect x="0" y="4" width="2" height="2"/><rect x="3" y="4" width="2" height="2"/><rect x="0" y="8" width="2" height="2"/><rect x="3" y="8" width="2" height="2"/></g></svg>
<svg class="i" style="left:1484px;top:56px;" width="16" height="16" viewBox="0 0 16 16" fill="none" stroke="#1e1e1e" stroke-width="1.2"><rect x="7.5" y="0.5" width="8" height="7"/><path d="M6 1 L1 10 H11 Z" /><circle cx="6" cy="11" r="4.5"/></svg>
<svg class="i" style="left:1510px;top:56px;" width="16" height="16" viewBox="0 0 16 16" fill="none" stroke="#1e1e1e" stroke-width="1.2"><path d="M2 12 V4 L6 1.5 H13 L15 6 V13 H4"/><circle cx="9" cy="8" r="3.5"/><circle cx="2.5" cy="14" r="1.3" fill="#f2f2f2"/></svg>
<svg class="i" style="left:1484px;top:81px;" width="16" height="16" viewBox="0 0 16 16" fill="none" stroke="#1e1e1e" stroke-width="1.2"><rect x="1.5" y="1.5" width="13" height="13"/><path d="M2 14 L6 8 L9 11 L11 9 L14 14 Z" fill="#1e1e1e"/><circle cx="11" cy="5" r="1.5" fill="#1e1e1e"/></svg>
<svg class="i" style="left:1510px;top:81px;" width="16" height="16" viewBox="0 0 16 16" fill="none" stroke="#1e1e1e" stroke-width="1.2"><path d="M1.5 4.5 V14.5 H11.5 V11"/><path d="M4.5 1.5 H14.5 V11.5" stroke-dasharray="1.5 1"/><path d="M6 4 L13 11"/></svg>
<svg class="i" style="left:1484px;top:106px;" width="16" height="16" viewBox="0 0 16 16" fill="none" stroke="#1e1e1e" stroke-width="1.2"><path d="M1.5 3 V14.5 H14.5 V3 H9 M11 0.5 V5 M13 3 H9"/><path d="M4 11 H12 M4 11 L6 9 M12 11 L10 13"/></svg>
<svg class="i" style="left:1510px;top:106px;" width="16" height="16" viewBox="0 0 16 16" fill="none" stroke="#1e1e1e" stroke-width="1.2"><path d="M3 15 L6 8 L9 15 M6 8 V1.5 H15 V8 H6"/></svg>
<div class="t" style="left:1482px;top:128px;font-size:10.6px;color:#333;font-weight:normal;letter-spacing:-0.2px">Вст...</div>
<svg class="i" style="left:1508px;top:133px;" width="9" height="5" viewBox="0 0 9 5" fill="none" stroke="#1e1e1e" stroke-width="1.2"><path d="M0 0 H9 L4.5 4.5 Z" fill="#1e1e1e" stroke="none"/></svg>
<svg class="i" style="left:1524px;top:130px;" width="5" height="10" viewBox="0 0 5 10" fill="none" stroke="#1e1e1e" stroke-width="1.2"><g fill="#777" stroke="none"><rect x="0" y="0" width="2" height="2"/><rect x="3" y="0" width="2" height="2"/><rect x="0" y="4" width="2" height="2"/><rect x="3" y="4" width="2" height="2"/><rect x="0" y="8" width="2" height="2"/><rect x="3" y="8" width="2" height="2"/></g></svg>
<svg class="i" style="left:1537px;top:56px;" width="16" height="16" viewBox="0 0 16 16" fill="none" stroke="#1e1e1e" stroke-width="1.2"><path d="M1.5 14.5 V5.5 H6.5 V1.5 H14.5 V14.5 Z M3.5 12.5 V7.5 H8.5 V3.5 H12.5 V12.5 Z"/></svg>
<svg class="i" style="left:1563px;top:56px;" width="16" height="16" viewBox="0 0 16 16" fill="none" stroke="#1e1e1e" stroke-width="1.2"><path d="M1 7 H9 M13 0 V16 M11 7 H15" stroke-dasharray="2 1"/></svg>
<svg class="i" style="left:1537px;top:81px;" width="16" height="16" viewBox="0 0 16 16" fill="none" stroke="#1e1e1e" stroke-width="1.2"><rect x="1" y="6" width="9" height="9" fill="#1e1e1e" stroke="none"/><circle cx="10" cy="6" r="5.5" fill="#1e1e1e" stroke="none"/></svg>
<svg class="i" style="left:1563px;top:81px;" width="16" height="16" viewBox="0 0 16 16" fill="none" stroke="#1e1e1e" stroke-width="1.2"><path d="M1.5 14.5 V8 L5 8 C4 3 8 1 11 2 C15 3 16 7 12 9 V14.5 Z"/></svg>
<svg class="i" style="left:1537px;top:106px;" width="16" height="16" viewBox="0 0 16 16" fill="none" stroke="#1e1e1e" stroke-width="1.2"><path d="M3 9 L8 3 L13 7 L10 11 Z" fill="#1e1e1e"/><path d="M1 13 H15 M1 11 V15 M15 11 V15" stroke-dasharray="1 1"/></svg>
<div class="t" style="left:1536px;top:128px;font-size:10.6px;color:#333;font-weight:normal;letter-spacing:-0.2px">Инстр...</div>
<svg class="i" style="left:1577px;top:130px;" width="5" height="10" viewBox="0 0 5 10" fill="none" stroke="#1e1e1e" stroke-width="1.2"><g fill="#777" stroke="none"><rect x="0" y="0" width="2" height="2"/><rect x="3" y="0" width="2" height="2"/><rect x="0" y="4" width="2" height="2"/><rect x="3" y="4" width="2" height="2"/><rect x="0" y="8" width="2" height="2"/><rect x="3" y="8" width="2" height="2"/></g></svg>
<svg class="i" style="left:1589px;top:56px;" width="16" height="16" viewBox="0 0 16 16" fill="none" stroke="#1e1e1e" stroke-width="1.2"><path d="M3.5 0.5 V11 L8 15 L12.5 11 V0.5 Z" fill="#fff"/><path d="M1 3 L3.5 0.5 M1 7 L3.5 4.5 M1 11 L3.5 8.5 M1 14 L4.5 11 M12.5 3 L15 0.5 M12.5 7 L15 4.5 M12.5 11 L15 8.5 M11.5 14 L15 11" stroke-width="1"/><path d="M5.5 0.5 V10"/><path d="M18.5 11.5 V16.5 H13.5 Z" fill="#1e1e1e" stroke="none"/></svg><div class="t" style="left:1611px;top:51px;font-size:12px;color:#1e1e1e;font-weight:normal;">Отверстие</div><div class="t" style="left:1611px;top:61.5px;font-size:12px;color:#1e1e1e;font-weight:normal;">простое</div>
<svg class="i" style="left:1589px;top:81px;" width="16" height="16" viewBox="0 0 16 16" fill="none" stroke="#1e1e1e" stroke-width="1.2"><circle cx="8" cy="8" r="7"/><circle cx="8" cy="8.5" r="4" stroke-dasharray="18 6"/><path d="M6 8.5 H10 M8 6.5 V10.5" stroke-width="1"/></svg><div class="t" style="left:1611px;top:76px;font-size:12px;color:#1e1e1e;font-weight:normal;">Наружная</div><div class="t" style="left:1611px;top:86.5px;font-size:12px;color:#1e1e1e;font-weight:normal;">резьба</div>
<svg class="i" style="left:1589px;top:106px;" width="16" height="16" viewBox="0 0 16 16" fill="none" stroke="#1e1e1e" stroke-width="1.2"><path d="M1 7 H10 L8 12 H4 Z M6 12 V15"/><path d="M10 4 C10 1 15 1 15 5 M15 5 L13 4 M15 5 L16 3 M10 10 C15 10 15 7 15 7"/></svg><div class="t" style="left:1611px;top:101px;font-size:12px;color:#1e1e1e;font-weight:normal;">Перестроить</div><div class="t" style="left:1611px;top:111.5px;font-size:12px;color:#1e1e1e;font-weight:normal;">отверстия и из...</div>
<div class="t" style="left:1490px;width:300px;top:128px;text-align:center;font-size:10.6px;letter-spacing:-0.2px;color:#333">Отверстия и резьбы</div>
<svg class="i" style="left:1698px;top:130px;" width="5" height="10" viewBox="0 0 5 10" fill="none" stroke="#1e1e1e" stroke-width="1.2"><g fill="#777" stroke="none"><rect x="0" y="0" width="2" height="2"/><rect x="3" y="0" width="2" height="2"/><rect x="0" y="4" width="2" height="2"/><rect x="3" y="4" width="2" height="2"/><rect x="0" y="8" width="2" height="2"/><rect x="3" y="8" width="2" height="2"/></g></svg>
<svg class="i" style="left:1711px;top:56px;" width="16" height="16" viewBox="0 0 16 16" fill="none" stroke="#1e1e1e" stroke-width="1.2"><rect x="1.5" y="2.5" width="11" height="13"/><rect x="4" y="1" width="5" height="3" fill="#1e1e1e" stroke="none"/><circle cx="8" cy="9" r="3.5"/><path d="M10.5 11.5 L15 16" stroke-width="2"/></svg>
<svg class="i" style="left:1711px;top:81px;" width="16" height="16" viewBox="0 0 16 16" fill="none" stroke="#1e1e1e" stroke-width="1.2"><g stroke="#c8c8c8"><rect x="1.5" y="2.5" width="13" height="12"/><circle cx="8" cy="9" r="3.5"/><path d="M10.5 11.5 L14 15" stroke-width="2"/></g></svg>
<div class="t" style="left:1709px;top:128px;font-size:10.6px;color:#333;font-weight:normal;letter-spacing:-0.2px">Р..</div>
<svg class="i" style="left:1725px;top:130px;" width="5" height="10" viewBox="0 0 5 10" fill="none" stroke="#1e1e1e" stroke-width="1.2"><g fill="#777" stroke="none"><rect x="0" y="0" width="2" height="2"/><rect x="3" y="0" width="2" height="2"/><rect x="0" y="4" width="2" height="2"/><rect x="3" y="4" width="2" height="2"/><rect x="0" y="8" width="2" height="2"/><rect x="3" y="8" width="2" height="2"/></g></svg>
<div class="r" style="left:0px;top:145px;width:26px;height:895px;background:#c8c8c8;"></div>
<div class="r" style="left:0px;top:145px;width:26px;height:125px;background:#f0f0f0;"></div>
<div class="r" style="left:0px;top:145px;width:26px;height:24px;background:#4a4a4a;"></div>
<svg class="i" style="left:6px;top:148px;" width="13" height="17" viewBox="0 0 13 17" fill="none" stroke="#1e1e1e" stroke-width="1.2"><path d="M2.5 1 V14 M2.5 4.5 H8 M2.5 9 H8 M2.5 14 H8" stroke="#fff" stroke-width="1.2"/><circle cx="2.5" cy="1.5" r="1.5" fill="#4a4a4a" stroke="#fff"/><circle cx="9.5" cy="4.5" r="1.5" fill="#4a4a4a" stroke="#fff"/><circle cx="9.5" cy="9" r="1.5" fill="#4a4a4a" stroke="#fff"/><circle cx="9.5" cy="14" r="1.5" fill="#4a4a4a" stroke="#fff"/></svg>
<svg class="i" style="left:6px;top:173px;" width="12" height="16" viewBox="0 0 12 16" fill="none" stroke="#1e1e1e" stroke-width="1.2"><rect x="0.5" y="0.5" width="11" height="15"/><path d="M3 4 H5 M7 4 H10 M2.5 8 L4 9.5 L6 6.5 M7 8.5 H10 M2.5 12 L4 13.5 L6 10.5 M7 12.5 H10" stroke-width="1"/></svg>
<svg class="i" style="left:4px;top:195px" width="20" height="24" viewBox="0 0 20 24"><text x="2" y="17" font-family="Liberation Serif" font-style="italic" font-size="19" fill="#222">f</text><text x="9.5" y="20" font-family="Liberation Sans" font-size="11" fill="#222">x</text></svg>
<svg class="i" style="left:5px;top:223px;" width="17" height="17" viewBox="0 0 17 17" fill="none" stroke="#1e1e1e" stroke-width="1.2"><path d="M2 2.5 H15 M2 8.5 H15 M2 14.5 H15" stroke="#333" stroke-width="3.2" stroke-linecap="round"/></svg>
<svg class="i" style="left:3px;top:247px" width="22" height="20" viewBox="0 0 22 20"><text x="1.5" y="9.5" font-family="Liberation Sans" font-size="9" fill="#222">1</text><text x="13.5" y="18.5" font-family="Liberation Sans" font-size="9" fill="#222">2</text><path d="M14 9.5 V5 H8.5 M10.5 3 L8.5 5 L10.5 7" fill="none" stroke="#222" stroke-width="1.2"/><path d="M5 10 V15 H10 M8 13 L10 15 L8 17" fill="none" stroke="#222" stroke-width="1.2"/></svg>
<div class="r" style="left:26px;top:145px;width:1px;height:895px;background:#696969;"></div>
<div class="r" style="left:27px;top:145px;width:310px;height:895px;background:#f2f2f2;"></div>
<div class="r" style="left:337px;top:145px;width:1px;height:895px;background:#696969;"></div>
<div class="r" style="left:27px;top:145px;width:310px;height:16px;background:#cccccc;"></div>
<div class="t" style="left:30px;top:145px;font-size:12px;color:#222;font-weight:normal;">Дерево чертежа</div>
<svg class="i" style="left:321px;top:146px;" width="14" height="14" viewBox="0 0 14 14" fill="none" stroke="#1e1e1e" stroke-width="1.2"><circle cx="7" cy="7" r="3.6" stroke-width="1.8"/><path d="M7 0.5 V3 M7 11 V13.5 M0.5 7 H3 M11 7 H13.5 M2.4 2.4 L4 4 M10 10 L11.6 11.6 M11.6 2.4 L10 4 M4 10 L2.4 11.6" stroke-width="2"/></svg>
<div class="r" style="left:27px;top:161px;width:310px;height:1px;background:#696969;"></div>
<div class="r" style="left:27px;top:162px;width:310px;height:25px;background:#f0f0f0;"></div>
<svg class="i" style="left:33px;top:167px;" width="14" height="10" viewBox="0 0 14 10" fill="none" stroke="#1e1e1e" stroke-width="1.2"><rect x="0.5" y="0.5" width="13" height="9"/><rect x="7.5" y="5.5" width="6" height="4"/></svg>
<svg class="i" style="left:57px;top:166px;" width="16" height="16" viewBox="0 0 16 16" fill="none" stroke="#1e1e1e" stroke-width="1.2"><rect x="0.5" y="0.5" width="15" height="15"/><path d="M5 4 V11 H12 M3.5 5.5 L5 3.5 L6.5 5.5 M10 9.5 L12 11 L10 12.5"/></svg>
<svg class="i" style="left:83px;top:170px;" width="16" height="6" viewBox="0 0 16 6" fill="none" stroke="#1e1e1e" stroke-width="1.2"><path d="M4 0 H16 L12 6 H0 Z" fill="#222" stroke="none"/></svg>
<svg class="i" style="left:110px;top:165px;" width="16" height="16" viewBox="0 0 16 16" fill="none" stroke="#1e1e1e" stroke-width="1.2"><rect x="7.5" y="0.5" width="8" height="7"/><path d="M6 2 L1 11 H11 Z"/><circle cx="6" cy="11" r="4.5"/></svg>
<svg class="i" style="left:136px;top:166px;" width="16" height="16" viewBox="0 0 16 16" fill="none" stroke="#1e1e1e" stroke-width="1.2"><rect x="0.5" y="0.5" width="15" height="15"/><path d="M1 15 L6 8 L9 11 L11 9 L15 15 Z" fill="#1e1e1e"/><circle cx="11.5" cy="4.5" r="1.6" fill="#1e1e1e"/></svg>
<svg class="i" style="left:162px;top:166px;" width="16" height="16" viewBox="0 0 16 16" fill="none" stroke="#1e1e1e" stroke-width="1.2"><path d="M0.5 3 V15.5 H15.5 V3 H10 M12.5 0 V6 M9.5 3 H15"/><path d="M3 11 H12 M3 11 L5 9 M12 11 L10 13" stroke-width="1"/></svg>
<div class="r" style="left:27px;top:187px;width:310px;height:1px;background:#d8d8d8;"></div>
<div class="r" style="left:28px;top:188px;width:150px;height:22px;background:#ffffff;border-right:1px solid #c8c8c8;border-bottom:1px solid #444"></div>
<div class="r" style="left:30px;top:190px;width:21px;height:16px;background:#000;"></div>
<div class="t" style="left:37px;top:190px;font-size:12px;color:#fff;font-weight:normal;">1</div>
<div class="t" style="left:53px;top:190px;font-size:12px;color:#111;font-weight:normal;">Вид 1 (2:1)</div>
<svg class="i" style="left:164px;top:196px;" width="10" height="5" viewBox="0 0 10 5" fill="none" stroke="#1e1e1e" stroke-width="1.2"><path d="M0 0 H10 L5 5 Z" fill="#1e1e1e" stroke="none"/></svg>
<div class="r" style="left:178px;top:188px;width:7px;height:22px;background:#f0f0f0;"></div>
<div class="r" style="left:185px;top:188px;width:152px;height:22px;background:#ffffff;border-bottom:1px solid #444"></div>
<div class="r" style="left:188px;top:190px;width:21px;height:16px;background:#000;"></div>
<div class="t" style="left:195px;top:190px;font-size:12px;color:#fff;font-weight:normal;">0</div>
<div class="t" style="left:211px;top:190px;font-size:12px;color:#111;font-weight:normal;">Системный слой</div>
<svg class="i" style="left:320px;top:196px;" width="10" height="5" viewBox="0 0 10 5" fill="none" stroke="#1e1e1e" stroke-width="1.2"><path d="M0 0 H10 L5 5 Z" fill="#1e1e1e" stroke="none"/></svg>
<div class="r" style="left:27px;top:210px;width:310px;height:26px;background:#ffffff;"></div>
<div class="r" style="left:28px;top:211px;width:19px;height:24px;background:#f0f0f0;"></div>
<svg class="i" style="left:30px;top:216px;" width="15" height="14" viewBox="0 0 15 14" fill="none" stroke="#1e1e1e" stroke-width="1.2"><path d="M0 0 H15 L9 6.5 V14 L6 13 V6.5 Z" fill="#222" stroke="none"/></svg>
<svg class="i" style="left:58px;top:215px;" width="13" height="14" viewBox="0 0 13 14" fill="none" stroke="#1e1e1e" stroke-width="1.2"><circle cx="8" cy="5.5" r="4.3" stroke="#aaa" stroke-width="1.4"/><path d="M5 8.5 L1 12.5" stroke="#aaa" stroke-width="1.8"/></svg>
<div class="t" style="left:77px;top:215px;font-size:12px;color:#a8a8a8;font-weight:normal;">Поиск (Ctrl+/)</div>
<div class="r" style="left:27px;top:236px;width:310px;height:1px;background:#555;"></div>
<div class="r" style="left:27px;top:237px;width:130px;height:53px;background:#e3e3e3;"></div>
<div class="r" style="left:157px;top:237px;width:180px;height:53px;background:#f0f0f0;"></div>
<div class="r" style="left:27px;top:263px;width:310px;height:1px;background:#e8e8e8;"></div>
<div class="r" style="left:27px;top:290px;width:310px;height:1px;background:#555;"></div>
<div class="r" style="left:27px;top:291px;width:130px;height:51px;background:#e3e3e3;"></div>
<div class="r" style="left:157px;top:291px;width:180px;height:51px;background:#f0f0f0;"></div>
<div class="r" style="left:27px;top:316px;width:310px;height:1px;background:#e8e8e8;"></div>
<div class="r" style="left:27px;top:342px;width:310px;height:1px;background:#e3e3e3;"></div>
<svg class="i" style="left:181px;top:243px;" width="16" height="16" viewBox="0 0 16 16" fill="none" stroke="#1e1e1e" stroke-width="1.2"><rect x="0.5" y="1.5" width="15" height="13"/><path d="M2.5 5 H8 M2.5 5 L4.5 3.2 M2.5 5 L4.5 6.8"/><rect x="8.5" y="3" width="3.5" height="4.5"/><path d="M12.5 2 V8 M2.5 9.5 H12.5 M8.5 9.5 V14"/><rect x="9" y="11.5" width="5" height="1.8" fill="#1e1e1e" stroke="none"/></svg>
<div class="t" style="left:199px;top:243px;font-size:12px;color:#222;font-weight:normal;">Чертеж</div>
<svg class="i" style="left:170px;top:274px;" width="5" height="7" viewBox="0 0 5 7" fill="none" stroke="#1e1e1e" stroke-width="1.2"><path d="M0 0 L5 3.5 L0 7 Z" fill="#222" stroke="none"/></svg>
<svg class="i" style="left:181px;top:270px;" width="16" height="16" viewBox="0 0 16 16" fill="none" stroke="#1e1e1e" stroke-width="1.2"><path d="M0.5 2 H6 L7.5 3.5 H15.5 V15.5 H0.5 Z" fill="#222" stroke="none"/><rect x="2.5" y="6" width="11" height="7.5" fill="#f0f0f0"/><rect x="8" y="10" width="5" height="3" fill="#222"/></svg>
<div class="t" style="left:199px;top:269px;font-size:12px;color:#222;font-weight:normal;">Листы</div>
<svg class="i" style="left:32px;top:298px;" width="15" height="10" viewBox="0 0 15 10" fill="none" stroke="#1e1e1e" stroke-width="1.2"><path d="M1 5 C3.5 0.8 11.5 0.8 14 5 C11.5 9.2 3.5 9.2 1 5 Z" fill="none" stroke="#222" stroke-width="1.6"/><circle cx="7.5" cy="5" r="2.3" fill="#222" stroke="none"/><circle cx="7.5" cy="5" r="0.9" fill="#e3e3e3" stroke="none"/></svg>
<svg class="i" style="left:59px;top:296px;" width="14" height="14" viewBox="0 0 14 14" fill="none" stroke="#1e1e1e" stroke-width="1.2"><path d="M2 6 V3 C2 0.5 6 0.5 6 3" stroke-width="1.3"/><rect x="3" y="6" width="10" height="8" fill="#222" stroke="none"/><rect x="6.5" y="8.5" width="3" height="3" fill="#e3e3e3" stroke="none"/></svg>
<div class="r" style="left:105px;top:290px;width:26px;height:26px;background:#000;"></div>
<div class="t" style="left:105px;top:295px;font-size:10px;color:#fff;font-weight:normal;width:26px;text-align:center">0</div>
<svg class="i" style="left:170px;top:300px;" width="5" height="7" viewBox="0 0 5 7" fill="none" stroke="#1e1e1e" stroke-width="1.2"><path d="M0 0 L5 3.5 L0 7 Z" fill="#222" stroke="none"/></svg>
<svg class="i" style="left:180px;top:294px;" width="17" height="18" viewBox="0 0 17 18" fill="none" stroke="#1e1e1e" stroke-width="1.2"><rect x="3.5" y="0.5" width="12" height="15"/><path d="M1 11 L3.5 14 L6 11 M3.5 13 V16 H8" stroke-width="1"/></svg>
<div class="t" style="left:199px;top:295px;font-size:12px;color:#222;font-weight:normal;">Системный вид (1:1)</div>
<svg class="i" style="left:32px;top:324px;" width="15" height="10" viewBox="0 0 15 10" fill="none" stroke="#1e1e1e" stroke-width="1.2"><path d="M1 5 C3.5 0.8 11.5 0.8 14 5 C11.5 9.2 3.5 9.2 1 5 Z" fill="none" stroke="#222" stroke-width="1.6"/><circle cx="7.5" cy="5" r="2.3" fill="#222" stroke="none"/><circle cx="7.5" cy="5" r="0.9" fill="#e3e3e3" stroke="none"/></svg>
<svg class="i" style="left:59px;top:322px;" width="14" height="14" viewBox="0 0 14 14" fill="none" stroke="#1e1e1e" stroke-width="1.2"><path d="M2 6 V3 C2 0.5 6 0.5 6 3" stroke-width="1.3"/><rect x="3" y="6" width="10" height="8" fill="#222" stroke="none"/><rect x="6.5" y="8.5" width="3" height="3" fill="#e3e3e3" stroke="none"/></svg>
<div class="r" style="left:105px;top:316px;width:26px;height:26px;background:#000;"></div>
<div class="t" style="left:105px;top:320px;font-size:10px;color:#fff;font-weight:normal;width:26px;text-align:center">1</div>
<div class="r" style="left:115px;top:336px;width:5px;height:5px;background:#fff;border-radius:50%"></div>
<svg class="i" style="left:170px;top:326px;" width="5" height="7" viewBox="0 0 5 7" fill="none" stroke="#1e1e1e" stroke-width="1.2"><path d="M0 0 L5 3.5 L0 7 Z" fill="#222" stroke="none"/></svg>
<svg class="i" style="left:181px;top:321px;" width="16" height="16" viewBox="0 0 16 16" fill="none" stroke="#1e1e1e" stroke-width="1.2"><rect x="0.5" y="0.5" width="15" height="15"/><path d="M5 4 V11 H12 M3.5 5.5 L5 3.5 L6.5 5.5 M10 9.5 L12 11 L10 12.5"/></svg>
<div class="r" style="left:203px;top:325px;width:8px;height:8px;background:#222;border-radius:50%"></div>
<div class="t" style="left:215px;top:321px;font-size:12px;color:#111;font-weight:bold;">Вид 1 (2:1)</div>
<div class="r" style="left:27px;top:812px;width:310px;height:1px;background:#e6e6e6;"></div>
<div class="r" style="left:27px;top:820px;width:310px;height:2px;background:#7a7a7a;"></div>
<div class="r" style="left:27px;top:822px;width:310px;height:2px;background:#cfcfcf;"></div>
<div class="r" style="left:338px;top:145px;width:1582px;height:895px;background:#ffffff;"></div>
<svg id="sheets" width="1582" height="895" viewBox="338 145 1582 895" style="position:absolute;left:338px;top:145px">
<g font-family="Liberation Sans, sans-serif" font-style="italic" fill="#262626">
<line x1="338.00" y1="311.50" x2="1920.00" y2="311.50" stroke="#000" stroke-width="1"/>
<line x1="338.00" y1="690.50" x2="1920.00" y2="690.50" stroke="#000" stroke-width="1"/>
<line x1="345.50" y1="311.50" x2="345.50" y2="690.50" stroke="#000" stroke-width="1"/>
<line x1="613.50" y1="311.50" x2="613.50" y2="690.50" stroke="#000" stroke-width="1"/>
<line x1="881.50" y1="311.50" x2="881.50" y2="690.50" stroke="#000" stroke-width="1"/>
<line x1="1149.50" y1="311.50" x2="1149.50" y2="690.50" stroke="#000" stroke-width="1"/>
<line x1="1417.50" y1="311.50" x2="1417.50" y2="690.50" stroke="#000" stroke-width="1"/>
<line x1="1685.50" y1="311.50" x2="1685.50" y2="690.50" stroke="#000" stroke-width="1"/>
<path d="M1920 322.5 H388.5 V656.5 H1920" fill="none" stroke="#c9c9c9" stroke-width="1"/>
<rect x="371" y="318" width="236" height="366" fill="none" stroke="#0a72ff" stroke-width="2"/>
<line x1="355.71" y1="499.00" x2="371.02" y2="499.00" stroke="#0a72ff" stroke-width="2"/>
<line x1="356.00" y1="499.07" x2="356.00" y2="684.12" stroke="#0a72ff" stroke-width="2"/>
<line x1="355.71" y1="684.00" x2="371.02" y2="684.00" stroke="#0a72ff" stroke-width="2"/>
<line x1="362.00" y1="499.07" x2="362.00" y2="684.12" stroke="#0a72ff" stroke-width="2"/>
<line x1="355.71" y1="544.00" x2="371.02" y2="544.00" stroke="#0a72ff" stroke-width="2"/>
<text x="0" y="0" font-size="4.22" text-anchor="middle" textLength="27.7" lengthAdjust="spacingAndGlyphs" fill="#000" transform="translate(361.5 521.4) rotate(-90) scale(1 1.28)">Подп. и дата</text>
<line x1="355.71" y1="576.00" x2="371.02" y2="576.00" stroke="#0a72ff" stroke-width="2"/>
<text x="0" y="0" font-size="4.22" text-anchor="middle" textLength="19.8" lengthAdjust="spacingAndGlyphs" fill="#000" transform="translate(361.5 559.7) rotate(-90) scale(1 1.28)">Инв. № дубл.</text>
<line x1="355.71" y1="608.00" x2="371.02" y2="608.00" stroke="#0a72ff" stroke-width="2"/>
<text x="0" y="0" font-size="4.22" text-anchor="middle" textLength="19.8" lengthAdjust="spacingAndGlyphs" fill="#000" transform="translate(361.5 591.6) rotate(-90) scale(1 1.28)">Взам. инв. №</text>
<line x1="355.71" y1="652.00" x2="371.02" y2="652.00" stroke="#0a72ff" stroke-width="2"/>
<text x="0" y="0" font-size="4.22" text-anchor="middle" textLength="27.7" lengthAdjust="spacingAndGlyphs" fill="#000" transform="translate(361.5 629.9) rotate(-90) scale(1 1.28)">Подп. и дата</text>
<text x="0" y="0" font-size="4.22" text-anchor="middle" textLength="19.8" lengthAdjust="spacingAndGlyphs" fill="#000" transform="translate(361.5 668.2) rotate(-90) scale(1 1.28)">Инв. № подл.</text>
<line x1="356.00" y1="317.88" x2="356.00" y2="471.02" stroke="#0a72ff" stroke-width="2"/>
<line x1="362.00" y1="317.88" x2="362.00" y2="471.02" stroke="#0a72ff" stroke-width="2"/>
<line x1="355.71" y1="318.00" x2="371.02" y2="318.00" stroke="#0a72ff" stroke-width="2"/>
<line x1="355.71" y1="394.00" x2="371.02" y2="394.00" stroke="#0a72ff" stroke-width="2"/>
<line x1="355.71" y1="471.00" x2="371.02" y2="471.00" stroke="#0a72ff" stroke-width="2"/>
<text x="0" y="0" font-size="4.22" text-anchor="middle" textLength="26.8" lengthAdjust="spacingAndGlyphs" fill="#000" transform="translate(361.5 356.2) rotate(-90) scale(1 1.28)">Перв. примен.</text>
<text x="0" y="0" font-size="4.22" text-anchor="middle" textLength="19.1" lengthAdjust="spacingAndGlyphs" fill="#000" transform="translate(361.5 432.7) rotate(-90) scale(1 1.28)">Справ. №</text>
<line x1="371.02" y1="633.00" x2="607.12" y2="633.00" stroke="#0a72ff" stroke-width="2"/>
<line x1="380.00" y1="633.07" x2="380.00" y2="652.21" stroke="#0a72ff" stroke-width="2"/>
<line x1="393.00" y1="633.07" x2="393.00" y2="684.12" stroke="#0a72ff" stroke-width="2"/>
<line x1="422.00" y1="633.07" x2="422.00" y2="684.12" stroke="#0a72ff" stroke-width="2"/>
<line x1="441.00" y1="633.07" x2="441.00" y2="684.12" stroke="#0a72ff" stroke-width="2"/>
<line x1="454.00" y1="633.07" x2="454.00" y2="684.12" stroke="#0a72ff" stroke-width="2"/>
<line x1="371.02" y1="639.50" x2="453.98" y2="639.50" stroke="#000" stroke-width="1"/>
<line x1="371.02" y1="646.00" x2="453.98" y2="646.00" stroke="#0a72ff" stroke-width="2"/>
<line x1="371.02" y1="652.00" x2="453.98" y2="652.00" stroke="#0a72ff" stroke-width="2"/>
<line x1="371.02" y1="658.50" x2="453.98" y2="658.50" stroke="#000" stroke-width="1"/>
<line x1="371.02" y1="664.50" x2="453.98" y2="664.50" stroke="#000" stroke-width="1"/>
<line x1="371.02" y1="671.50" x2="453.98" y2="671.50" stroke="#000" stroke-width="1"/>
<line x1="371.02" y1="677.50" x2="453.98" y2="677.50" stroke="#000" stroke-width="1"/>
<line x1="453.98" y1="652.00" x2="607.12" y2="652.00" stroke="#0a72ff" stroke-width="2"/>
<line x1="543.00" y1="652.21" x2="543.00" y2="684.12" stroke="#0a72ff" stroke-width="2"/>
<line x1="543.31" y1="659.00" x2="607.12" y2="659.00" stroke="#0a72ff" stroke-width="2"/>
<line x1="543.31" y1="665.00" x2="607.12" y2="665.00" stroke="#0a72ff" stroke-width="2"/>
<line x1="562.00" y1="652.21" x2="562.00" y2="664.98" stroke="#0a72ff" stroke-width="2"/>
<line x1="582.00" y1="652.21" x2="582.00" y2="664.98" stroke="#0a72ff" stroke-width="2"/>
<line x1="549.50" y1="658.60" x2="549.50" y2="664.98" stroke="#000" stroke-width="1"/>
<line x1="556.50" y1="658.60" x2="556.50" y2="664.98" stroke="#000" stroke-width="1"/>
<text x="0" y="0" font-size="8.20" text-anchor="start" textLength="77.5" lengthAdjust="spacingAndGlyphs" transform="translate(491.0 645.5) scale(1 1.28)">3112 014 000.000</text>
<text x="0" y="0" font-size="10.55" text-anchor="start" textLength="35.0" lengthAdjust="spacingAndGlyphs" transform="translate(481.0 673.5) scale(1 1.28)">Опора</text>
<text x="0" y="0" font-size="5.86" text-anchor="start" textLength="53.0" lengthAdjust="spacingAndGlyphs" transform="translate(548.5 673.0) scale(1 1.28)">ЧАО "Чкаловский"</text>
<text x="0" y="0" font-size="3.28" text-anchor="middle" textLength="9.0" lengthAdjust="spacingAndGlyphs" fill="#000" transform="translate(552.0 656.3) scale(1 1.28)">Лит.</text>
<text x="0" y="0" font-size="3.28" text-anchor="middle" textLength="10.0" lengthAdjust="spacingAndGlyphs" fill="#000" transform="translate(571.5 656.3) scale(1 1.28)">Лист</text>
<text x="0" y="0" font-size="3.28" text-anchor="middle" textLength="13.0" lengthAdjust="spacingAndGlyphs" fill="#000" transform="translate(594.0 656.3) scale(1 1.28)">Листов</text>
<text x="0" y="0" font-size="3.52" text-anchor="middle" fill="#000" transform="translate(571.5 663.0) scale(1 1.28)">1</text>
<text x="0" y="0" font-size="3.52" text-anchor="middle" fill="#000" transform="translate(594.0 663.0) scale(1 1.28)">12</text>
<text x="0" y="0" font-size="3.28" text-anchor="middle" textLength="7.1" lengthAdjust="spacingAndGlyphs" fill="#000" transform="translate(375.5 650.9) scale(1 1.28)">Изм.</text>
<text x="0" y="0" font-size="3.28" text-anchor="middle" textLength="10.2" lengthAdjust="spacingAndGlyphs" fill="#000" transform="translate(386.3 650.9) scale(1 1.28)">Лист</text>
<text x="0" y="0" font-size="3.28" text-anchor="middle" textLength="23.5" lengthAdjust="spacingAndGlyphs" fill="#000" transform="translate(407.4 650.9) scale(1 1.28)">№ докум.</text>
<text x="0" y="0" font-size="3.28" text-anchor="middle" textLength="15.3" lengthAdjust="spacingAndGlyphs" fill="#000" transform="translate(431.6 650.9) scale(1 1.28)">Подп.</text>
<text x="0" y="0" font-size="3.28" text-anchor="middle" textLength="10.2" lengthAdjust="spacingAndGlyphs" fill="#000" transform="translate(447.6 650.9) scale(1 1.28)">Дата</text>
<text x="0" y="0" font-size="3.44" text-anchor="start" textLength="20.0" lengthAdjust="spacingAndGlyphs" fill="#000" transform="translate(371.8 657.4) scale(1 1.28)">Разраб.</text>
<text x="0" y="0" font-size="3.44" text-anchor="start" textLength="16.0" lengthAdjust="spacingAndGlyphs" fill="#000" transform="translate(371.8 663.8) scale(1 1.28)">Пров.</text>
<text x="0" y="0" font-size="3.44" text-anchor="start" textLength="20.0" lengthAdjust="spacingAndGlyphs" fill="#000" transform="translate(371.8 676.5) scale(1 1.28)">Н.контр.</text>
<text x="0" y="0" font-size="3.44" text-anchor="start" textLength="12.8" lengthAdjust="spacingAndGlyphs" fill="#000" transform="translate(371.8 682.9) scale(1 1.28)">Утв.</text>
<text x="0" y="0" font-size="3.59" text-anchor="start" textLength="22.0" lengthAdjust="spacingAndGlyphs" fill="#000" transform="translate(467.0 689.5) scale(1 1.28)">Копировал</text>
<text x="0" y="0" font-size="3.59" text-anchor="start" textLength="16.0" lengthAdjust="spacingAndGlyphs" fill="#000" transform="translate(557.0 689.5) scale(1 1.28)">Формат</text>
<text x="0" y="0" font-size="3.59" text-anchor="start" textLength="6.0" lengthAdjust="spacingAndGlyphs" fill="#000" transform="translate(585.0 689.5) scale(1 1.28)">А4</text>
<text x="0" y="0" font-size="6.41" text-anchor="start" textLength="75.0" lengthAdjust="spacingAndGlyphs" transform="translate(458.0 334.9) scale(1 1.28)">ВВЕДЕНИЕ. ЦЕЛЬ РАБОТЫ</text>
<text x="0" y="0" font-size="6.41" text-anchor="start" textLength="167.0" lengthAdjust="spacingAndGlyphs" transform="translate(404.0 353.4) scale(1 1.28)">Курсовая работа по теме "Создание конструкторской</text>
<text x="0" y="0" font-size="6.41" text-anchor="start" textLength="166.0" lengthAdjust="spacingAndGlyphs" transform="translate(391.0 366.4) scale(1 1.28)">документации" выполнена на примере изделия "Опора".</text>
<text x="0" y="0" font-size="6.41" text-anchor="start" textLength="134.0" lengthAdjust="spacingAndGlyphs" transform="translate(404.0 379.2) scale(1 1.28)">Цель данной работы – приобретение опыта</text>
<text x="0" y="0" font-size="6.41" text-anchor="start" textLength="180.0" lengthAdjust="spacingAndGlyphs" transform="translate(391.0 392.4) scale(1 1.28)">изготовления комплекта конструкторской документации</text>
<text x="0" y="0" font-size="6.41" text-anchor="start" textLength="106.0" lengthAdjust="spacingAndGlyphs" transform="translate(442.0 429.9) scale(1 1.28)">1 РАСЧЕТ РЕЗЬБОВЫХ СОЕДИНЕНИЙ</text>
<text x="0" y="0" font-size="6.41" text-anchor="start" textLength="90.0" lengthAdjust="spacingAndGlyphs" transform="translate(451.0 442.9) scale(1 1.28)">1.1 Расчет соединения болтом</text>
<text x="0" y="0" font-size="6.41" text-anchor="start" textLength="131.0" lengthAdjust="spacingAndGlyphs" transform="translate(391.0 456.3) scale(1 1.28)">Длина болта рассчитывается по формуле</text>
<text x="0" y="0" font-size="6.41" text-anchor="start" textLength="82.0" lengthAdjust="spacingAndGlyphs" transform="translate(455.0 468.4) scale(1 1.28)">lб=Ф1 + Ф2 + S + m + a + c</text>
<text x="0" y="0" font-size="6.41" text-anchor="start" textLength="178.0" lengthAdjust="spacingAndGlyphs" transform="translate(391.0 480.9) scale(1 1.28)">где Ф1 и Ф2 – толщины соединяемых деталей (фланцев);</text>
<text x="0" y="0" font-size="6.41" text-anchor="start" textLength="61.0" lengthAdjust="spacingAndGlyphs" transform="translate(404.0 493.9) scale(1 1.28)">S – толщина шайбы;</text>
<text x="0" y="0" font-size="6.41" text-anchor="start" textLength="56.0" lengthAdjust="spacingAndGlyphs" transform="translate(404.0 506.7) scale(1 1.28)">m – высота гайки;</text>
<text x="0" y="0" font-size="6.41" text-anchor="start" textLength="53.0" lengthAdjust="spacingAndGlyphs" transform="translate(404.0 518.9) scale(1 1.28)">a – запас резьбы;</text>
<text x="0" y="0" font-size="6.41" text-anchor="start" textLength="61.0" lengthAdjust="spacingAndGlyphs" transform="translate(404.0 531.9) scale(1 1.28)">c – величина фаски;</text>
<text x="0" y="0" font-size="6.41" text-anchor="start" textLength="164.0" lengthAdjust="spacingAndGlyphs" transform="translate(391.0 544.9) scale(1 1.28)">причем a≈c≈0,3d, где d – номинальный диаметр болта</text>
<text x="0" y="0" font-size="6.41" text-anchor="start" textLength="191.0" lengthAdjust="spacingAndGlyphs" transform="translate(404.0 569.9) scale(1 1.28)">Номинальный диаметр болта 14 мм. Шаг мелкий, равный 1,5 мм.</text>
<text x="0" y="0" font-size="6.41" text-anchor="start" textLength="170.0" lengthAdjust="spacingAndGlyphs" transform="translate(405.0 582.9) scale(1 1.28)">Толщина соединяемых деталей, замеренных на чертеже</text>
<text x="0" y="0" font-size="6.41" text-anchor="start" textLength="181.0" lengthAdjust="spacingAndGlyphs" transform="translate(391.0 595.9) scale(1 1.28)">индивидуального задания с учетом масштаба составляет</text>
<text x="0" y="0" font-size="6.41" text-anchor="start" textLength="33.0" lengthAdjust="spacingAndGlyphs" transform="translate(481.0 608.9) scale(1 1.28)">Ф1 = 16 мм;</text>
<text x="0" y="0" font-size="6.41" text-anchor="start" textLength="35.0" lengthAdjust="spacingAndGlyphs" transform="translate(480.0 621.4) scale(1 1.28)">Ф2 = 22 мм.</text>
<rect x="639" y="318" width="236" height="366" fill="none" stroke="#0a72ff" stroke-width="2"/>
<line x1="623.71" y1="499.00" x2="639.02" y2="499.00" stroke="#0a72ff" stroke-width="2"/>
<line x1="624.00" y1="499.07" x2="624.00" y2="684.12" stroke="#0a72ff" stroke-width="2"/>
<line x1="623.71" y1="684.00" x2="639.02" y2="684.00" stroke="#0a72ff" stroke-width="2"/>
<line x1="630.00" y1="499.07" x2="630.00" y2="684.12" stroke="#0a72ff" stroke-width="2"/>
<line x1="623.71" y1="544.00" x2="639.02" y2="544.00" stroke="#0a72ff" stroke-width="2"/>
<text x="0" y="0" font-size="4.22" text-anchor="middle" textLength="27.7" lengthAdjust="spacingAndGlyphs" fill="#000" transform="translate(629.5 521.4) rotate(-90) scale(1 1.28)">Подп. и дата</text>
<line x1="623.71" y1="576.00" x2="639.02" y2="576.00" stroke="#0a72ff" stroke-width="2"/>
<text x="0" y="0" font-size="4.22" text-anchor="middle" textLength="19.8" lengthAdjust="spacingAndGlyphs" fill="#000" transform="translate(629.5 559.7) rotate(-90) scale(1 1.28)">Инв. № дубл.</text>
<line x1="623.71" y1="608.00" x2="639.02" y2="608.00" stroke="#0a72ff" stroke-width="2"/>
<text x="0" y="0" font-size="4.22" text-anchor="middle" textLength="19.8" lengthAdjust="spacingAndGlyphs" fill="#000" transform="translate(629.5 591.6) rotate(-90) scale(1 1.28)">Взам. инв. №</text>
<line x1="623.71" y1="652.00" x2="639.02" y2="652.00" stroke="#0a72ff" stroke-width="2"/>
<text x="0" y="0" font-size="4.22" text-anchor="middle" textLength="27.7" lengthAdjust="spacingAndGlyphs" fill="#000" transform="translate(629.5 629.9) rotate(-90) scale(1 1.28)">Подп. и дата</text>
<text x="0" y="0" font-size="4.22" text-anchor="middle" textLength="19.8" lengthAdjust="spacingAndGlyphs" fill="#000" transform="translate(629.5 668.2) rotate(-90) scale(1 1.28)">Инв. № подл.</text>
<line x1="639.02" y1="665.00" x2="875.12" y2="665.00" stroke="#0a72ff" stroke-width="2"/>
<line x1="648.00" y1="664.98" x2="648.00" y2="684.12" stroke="#0a72ff" stroke-width="2"/>
<line x1="661.00" y1="664.98" x2="661.00" y2="684.12" stroke="#0a72ff" stroke-width="2"/>
<line x1="690.00" y1="664.98" x2="690.00" y2="684.12" stroke="#0a72ff" stroke-width="2"/>
<line x1="709.00" y1="664.98" x2="709.00" y2="684.12" stroke="#0a72ff" stroke-width="2"/>
<line x1="722.00" y1="664.98" x2="722.00" y2="684.12" stroke="#0a72ff" stroke-width="2"/>
<line x1="639.02" y1="671.50" x2="721.98" y2="671.50" stroke="#000" stroke-width="1"/>
<line x1="639.02" y1="678.00" x2="721.98" y2="678.00" stroke="#0a72ff" stroke-width="2"/>
<line x1="862.00" y1="664.98" x2="862.00" y2="684.12" stroke="#0a72ff" stroke-width="2"/>
<line x1="862.36" y1="674.00" x2="875.12" y2="674.00" stroke="#0a72ff" stroke-width="2"/>
<text x="0" y="0" font-size="3.28" text-anchor="middle" textLength="7.1" lengthAdjust="spacingAndGlyphs" fill="#000" transform="translate(643.5 682.8) scale(1 1.28)">Изм.</text>
<text x="0" y="0" font-size="3.28" text-anchor="middle" textLength="10.2" lengthAdjust="spacingAndGlyphs" fill="#000" transform="translate(654.3 682.8) scale(1 1.28)">Лист</text>
<text x="0" y="0" font-size="3.28" text-anchor="middle" textLength="23.5" lengthAdjust="spacingAndGlyphs" fill="#000" transform="translate(675.4 682.8) scale(1 1.28)">№ докум.</text>
<text x="0" y="0" font-size="3.28" text-anchor="middle" textLength="15.3" lengthAdjust="spacingAndGlyphs" fill="#000" transform="translate(699.6 682.8) scale(1 1.28)">Подп.</text>
<text x="0" y="0" font-size="3.28" text-anchor="middle" textLength="10.2" lengthAdjust="spacingAndGlyphs" fill="#000" transform="translate(715.6 682.8) scale(1 1.28)">Дата</text>
<text x="0" y="0" font-size="7.97" text-anchor="start" textLength="79.5" lengthAdjust="spacingAndGlyphs" transform="translate(751.0 677.5) scale(1 1.28)">3112 014 000.000</text>
<text x="0" y="0" font-size="3.28" text-anchor="middle" textLength="8.0" lengthAdjust="spacingAndGlyphs" fill="#000" transform="translate(868.7 671.5) scale(1 1.28)">Лист</text>
<text x="0" y="0" font-size="3.91" text-anchor="middle" fill="#000" transform="translate(868.7 681.6) scale(1 1.28)">2</text>
<text x="0" y="0" font-size="3.59" text-anchor="start" textLength="22.0" lengthAdjust="spacingAndGlyphs" fill="#000" transform="translate(735.0 689.5) scale(1 1.28)">Копировал</text>
<text x="0" y="0" font-size="3.59" text-anchor="start" textLength="16.0" lengthAdjust="spacingAndGlyphs" fill="#000" transform="translate(825.0 689.5) scale(1 1.28)">Формат</text>
<text x="0" y="0" font-size="3.59" text-anchor="start" textLength="6.0" lengthAdjust="spacingAndGlyphs" fill="#000" transform="translate(853.0 689.5) scale(1 1.28)">А4</text>
<text x="0" y="0" font-size="6.41" text-anchor="start" textLength="195.0" lengthAdjust="spacingAndGlyphs" transform="translate(655.0 336.9) scale(1 1.28)">Толщина шайбы по ГОСТ 11371-78 в соответствии с величиной</text>
<text x="0" y="0" font-size="6.41" text-anchor="start" textLength="123.0" lengthAdjust="spacingAndGlyphs" transform="translate(655.0 349.4) scale(1 1.28)">номинального диаметра болта S=2,5 мм.</text>
<text x="0" y="0" font-size="6.41" text-anchor="start" textLength="188.0" lengthAdjust="spacingAndGlyphs" transform="translate(655.0 361.9) scale(1 1.28)">Высота гайки по ГОСТ 5915-70 в соответствии с величиной</text>
<text x="0" y="0" font-size="6.41" text-anchor="start" textLength="120.0" lengthAdjust="spacingAndGlyphs" transform="translate(655.0 374.4) scale(1 1.28)">номинального диаметра болта m=11 мм.</text>
<text x="0" y="0" font-size="6.41" text-anchor="start" textLength="69.0" lengthAdjust="spacingAndGlyphs" transform="translate(722.0 387.9) scale(1 1.28)">a=c=0,3·d=0,3·14=4,2 мм.</text>
<text x="0" y="0" font-size="6.41" text-anchor="start" textLength="109.0" lengthAdjust="spacingAndGlyphs" transform="translate(655.0 412.9) scale(1 1.28)">Расчетная длина болта равняется</text>
<text x="0" y="0" font-size="6.41" text-anchor="start" textLength="111.0" lengthAdjust="spacingAndGlyphs" transform="translate(700.0 426.4) scale(1 1.28)">lб= 16 + 22 + 2,5 + 11 + 4,2 = 55,7 мм</text>
<text x="0" y="0" font-size="6.41" text-anchor="start" textLength="194.0" lengthAdjust="spacingAndGlyphs" transform="translate(655.0 438.9) scale(1 1.28)">Принимаем по ГОСТ 7798-70 длину болта 60 мм. Длина резьбы</text>
<text x="0" y="0" font-size="6.41" text-anchor="start" textLength="29.0" lengthAdjust="spacingAndGlyphs" transform="translate(655.0 451.9) scale(1 1.28)">lб=34 мм</text>
<text x="0" y="0" font-size="6.41" text-anchor="start" textLength="95.0" lengthAdjust="spacingAndGlyphs" transform="translate(655.0 476.9) scale(1 1.28)">Состав болтового соединения:</text>
<text x="0" y="0" font-size="6.41" text-anchor="start" textLength="107.0" lengthAdjust="spacingAndGlyphs" transform="translate(655.0 502.4) scale(1 1.28)">Болт М14х1,5-6g×60.58 ГОСТ 7798-70</text>
<text x="0" y="0" font-size="6.41" text-anchor="start" textLength="91.0" lengthAdjust="spacingAndGlyphs" transform="translate(655.0 514.9) scale(1 1.28)">Гайка М14х1,5.5 ГОСТ 5915-70</text>
<text x="0" y="0" font-size="6.41" text-anchor="start" textLength="82.0" lengthAdjust="spacingAndGlyphs" transform="translate(655.0 527.9) scale(1 1.28)">Шайба 14.01 ГОСТ 11371-78</text>
<rect x="907" y="318" width="236" height="366" fill="none" stroke="#0a72ff" stroke-width="2"/>
<line x1="891.71" y1="499.00" x2="907.02" y2="499.00" stroke="#0a72ff" stroke-width="2"/>
<line x1="892.00" y1="499.07" x2="892.00" y2="684.12" stroke="#0a72ff" stroke-width="2"/>
<line x1="891.71" y1="684.00" x2="907.02" y2="684.00" stroke="#0a72ff" stroke-width="2"/>
<line x1="898.00" y1="499.07" x2="898.00" y2="684.12" stroke="#0a72ff" stroke-width="2"/>
<line x1="891.71" y1="544.00" x2="907.02" y2="544.00" stroke="#0a72ff" stroke-width="2"/>
<text x="0" y="0" font-size="4.22" text-anchor="middle" textLength="27.7" lengthAdjust="spacingAndGlyphs" fill="#000" transform="translate(897.5 521.4) rotate(-90) scale(1 1.28)">Подп. и дата</text>
<line x1="891.71" y1="576.00" x2="907.02" y2="576.00" stroke="#0a72ff" stroke-width="2"/>
<text x="0" y="0" font-size="4.22" text-anchor="middle" textLength="19.8" lengthAdjust="spacingAndGlyphs" fill="#000" transform="translate(897.5 559.7) rotate(-90) scale(1 1.28)">Инв. № дубл.</text>
<line x1="891.71" y1="608.00" x2="907.02" y2="608.00" stroke="#0a72ff" stroke-width="2"/>
<text x="0" y="0" font-size="4.22" text-anchor="middle" textLength="19.8" lengthAdjust="spacingAndGlyphs" fill="#000" transform="translate(897.5 591.6) rotate(-90) scale(1 1.28)">Взам. инв. №</text>
<line x1="891.71" y1="652.00" x2="907.02" y2="652.00" stroke="#0a72ff" stroke-width="2"/>
<text x="0" y="0" font-size="4.22" text-anchor="middle" textLength="27.7" lengthAdjust="spacingAndGlyphs" fill="#000" transform="translate(897.5 629.9) rotate(-90) scale(1 1.28)">Подп. и дата</text>
<text x="0" y="0" font-size="4.22" text-anchor="middle" textLength="19.8" lengthAdjust="spacingAndGlyphs" fill="#000" transform="translate(897.5 668.2) rotate(-90) scale(1 1.28)">Инв. № подл.</text>
<line x1="907.02" y1="665.00" x2="1143.12" y2="665.00" stroke="#0a72ff" stroke-width="2"/>
<line x1="916.00" y1="664.98" x2="916.00" y2="684.12" stroke="#0a72ff" stroke-width="2"/>
<line x1="929.00" y1="664.98" x2="929.00" y2="684.12" stroke="#0a72ff" stroke-width="2"/>
<line x1="958.00" y1="664.98" x2="958.00" y2="684.12" stroke="#0a72ff" stroke-width="2"/>
<line x1="977.00" y1="664.98" x2="977.00" y2="684.12" stroke="#0a72ff" stroke-width="2"/>
<line x1="990.00" y1="664.98" x2="990.00" y2="684.12" stroke="#0a72ff" stroke-width="2"/>
<line x1="907.02" y1="671.50" x2="989.98" y2="671.50" stroke="#000" stroke-width="1"/>
<line x1="907.02" y1="678.00" x2="989.98" y2="678.00" stroke="#0a72ff" stroke-width="2"/>
<line x1="1130.00" y1="664.98" x2="1130.00" y2="684.12" stroke="#0a72ff" stroke-width="2"/>
<line x1="1130.36" y1="674.00" x2="1143.12" y2="674.00" stroke="#0a72ff" stroke-width="2"/>
<text x="0" y="0" font-size="3.28" text-anchor="middle" textLength="7.1" lengthAdjust="spacingAndGlyphs" fill="#000" transform="translate(911.5 682.8) scale(1 1.28)">Изм.</text>
<text x="0" y="0" font-size="3.28" text-anchor="middle" textLength="10.2" lengthAdjust="spacingAndGlyphs" fill="#000" transform="translate(922.3 682.8) scale(1 1.28)">Лист</text>
<text x="0" y="0" font-size="3.28" text-anchor="middle" textLength="23.5" lengthAdjust="spacingAndGlyphs" fill="#000" transform="translate(943.4 682.8) scale(1 1.28)">№ докум.</text>
<text x="0" y="0" font-size="3.28" text-anchor="middle" textLength="15.3" lengthAdjust="spacingAndGlyphs" fill="#000" transform="translate(967.6 682.8) scale(1 1.28)">Подп.</text>
<text x="0" y="0" font-size="3.28" text-anchor="middle" textLength="10.2" lengthAdjust="spacingAndGlyphs" fill="#000" transform="translate(983.6 682.8) scale(1 1.28)">Дата</text>
<text x="0" y="0" font-size="7.97" text-anchor="start" textLength="79.5" lengthAdjust="spacingAndGlyphs" transform="translate(1019.0 677.5) scale(1 1.28)">3112 014 000.000</text>
<text x="0" y="0" font-size="3.28" text-anchor="middle" textLength="8.0" lengthAdjust="spacingAndGlyphs" fill="#000" transform="translate(1136.7 671.5) scale(1 1.28)">Лист</text>
<text x="0" y="0" font-size="3.91" text-anchor="middle" fill="#000" transform="translate(1136.7 681.6) scale(1 1.28)">3</text>
<text x="0" y="0" font-size="3.59" text-anchor="start" textLength="22.0" lengthAdjust="spacingAndGlyphs" fill="#000" transform="translate(1003.0 689.5) scale(1 1.28)">Копировал</text>
<text x="0" y="0" font-size="3.59" text-anchor="start" textLength="16.0" lengthAdjust="spacingAndGlyphs" fill="#000" transform="translate(1093.0 689.5) scale(1 1.28)">Формат</text>
<text x="0" y="0" font-size="3.59" text-anchor="start" textLength="6.0" lengthAdjust="spacingAndGlyphs" fill="#000" transform="translate(1121.0 689.5) scale(1 1.28)">А4</text>
<text x="0" y="0" font-size="6.41" text-anchor="start" textLength="99.0" lengthAdjust="spacingAndGlyphs" transform="translate(979.0 332.9) scale(1 1.28)">1.2 Расчет соединения шпилькой</text>
<text x="0" y="0" font-size="6.41" text-anchor="start" textLength="136.0" lengthAdjust="spacingAndGlyphs" transform="translate(925.0 345.4) scale(1 1.28)">Длина шпильки рассчитывается по формуле</text>
<text x="0" y="0" font-size="6.41" text-anchor="start" textLength="63.0" lengthAdjust="spacingAndGlyphs" transform="translate(999.0 358.5) scale(1 1.28)">lш=Ф + S + m + a + c</text>
<text x="0" y="0" font-size="6.41" text-anchor="start" textLength="156.0" lengthAdjust="spacingAndGlyphs" transform="translate(925.0 371.4) scale(1 1.28)">где Ф – толщина присоединяемой детали (фланца)</text>
<text x="0" y="0" font-size="6.41" text-anchor="start" textLength="63.0" lengthAdjust="spacingAndGlyphs" transform="translate(936.0 383.9) scale(1 1.28)">S – толщина шайбы;</text>
<text x="0" y="0" font-size="6.41" text-anchor="start" textLength="57.0" lengthAdjust="spacingAndGlyphs" transform="translate(936.0 396.4) scale(1 1.28)">m – высота гайки;</text>
<text x="0" y="0" font-size="6.41" text-anchor="start" textLength="53.0" lengthAdjust="spacingAndGlyphs" transform="translate(936.0 408.9) scale(1 1.28)">a – запас резьбы;</text>
<text x="0" y="0" font-size="6.41" text-anchor="start" textLength="61.0" lengthAdjust="spacingAndGlyphs" transform="translate(936.0 421.9) scale(1 1.28)">c – величина фаски;</text>
<text x="0" y="0" font-size="6.41" text-anchor="start" textLength="169.0" lengthAdjust="spacingAndGlyphs" transform="translate(925.0 435.4) scale(1 1.28)">причем a=c=0,3d, где d – номинальный диаметр шпильки</text>
<text x="0" y="0" font-size="6.41" text-anchor="start" textLength="200.0" lengthAdjust="spacingAndGlyphs" transform="translate(925.0 447.9) scale(1 1.28)">Номинальный диаметр шпильки 10 мм. Шаг крупный, равный 1,5 мм</text>
<text x="0" y="0" font-size="6.41" text-anchor="start" textLength="175.0" lengthAdjust="spacingAndGlyphs" transform="translate(925.0 460.4) scale(1 1.28)">Толщина присоединяемой детали измеряется на чертеже</text>
<text x="0" y="0" font-size="6.41" text-anchor="start" textLength="184.0" lengthAdjust="spacingAndGlyphs" transform="translate(925.0 472.9) scale(1 1.28)">индивидуального задания и с учетом масштаба составляет</text>
<text x="0" y="0" font-size="6.41" text-anchor="start" textLength="29.0" lengthAdjust="spacingAndGlyphs" transform="translate(1016.0 485.9) scale(1 1.28)">Ф = 8 мм</text>
<text x="0" y="0" font-size="6.41" text-anchor="start" textLength="193.0" lengthAdjust="spacingAndGlyphs" transform="translate(925.0 498.9) scale(1 1.28)">Толщина шайбы по ГОСТ 11371-78 в соответствии с величиной</text>
<text x="0" y="0" font-size="6.41" text-anchor="start" textLength="129.0" lengthAdjust="spacingAndGlyphs" transform="translate(925.0 511.4) scale(1 1.28)">номинального диаметра шпильки S=2,0 мм</text>
<text x="0" y="0" font-size="6.41" text-anchor="start" textLength="186.0" lengthAdjust="spacingAndGlyphs" transform="translate(925.0 524.4) scale(1 1.28)">Высота гайки по ГОСТ 5915-70 в соответствии с величиной</text>
<text x="0" y="0" font-size="6.41" text-anchor="start" textLength="124.0" lengthAdjust="spacingAndGlyphs" transform="translate(925.0 536.9) scale(1 1.28)">номинального диаметра шпильки m=8 мм.</text>
<text x="0" y="0" font-size="6.41" text-anchor="start" textLength="69.0" lengthAdjust="spacingAndGlyphs" transform="translate(995.0 549.9) scale(1 1.28)">a=c=0,3·d=0,3·10=3,0 мм.</text>
<text x="0" y="0" font-size="6.41" text-anchor="start" textLength="114.0" lengthAdjust="spacingAndGlyphs" transform="translate(925.0 561.9) scale(1 1.28)">Расчетная длина шпильки равняется</text>
<text x="0" y="0" font-size="6.41" text-anchor="start" textLength="86.0" lengthAdjust="spacingAndGlyphs" transform="translate(986.0 575.4) scale(1 1.28)">lш= 8 + 2,0 + 8 + 3,0 = 21 мм</text>
<text x="0" y="0" font-size="6.41" text-anchor="start" textLength="202.0" lengthAdjust="spacingAndGlyphs" transform="translate(925.0 587.9) scale(1 1.28)">Принимаем по ГОСТ 22032-76 длину шпильки 22 мм. Длина резьбы</text>
<text x="0" y="0" font-size="6.41" text-anchor="start" textLength="26.0" lengthAdjust="spacingAndGlyphs" transform="translate(925.0 600.9) scale(1 1.28)">lш=22 мм</text>
<text x="0" y="0" font-size="6.41" text-anchor="start" textLength="176.0" lengthAdjust="spacingAndGlyphs" transform="translate(925.0 612.9) scale(1 1.28)">Размеры отверстий под шпильку в соединяемых деталях:</text>
<text x="0" y="0" font-size="6.41" text-anchor="start" textLength="184.0" lengthAdjust="spacingAndGlyphs" transform="translate(936.0 625.9) scale(1 1.28)">В детали "Опора" – отверстие гладкое с зазором. Величина</text>
<text x="0" y="0" font-size="6.41" text-anchor="start" textLength="199.0" lengthAdjust="spacingAndGlyphs" transform="translate(925.0 638.9) scale(1 1.28)">зазора для шпильки М10 является стандартной. Диаметр отвер-</text>
<text x="0" y="0" font-size="6.41" text-anchor="start" textLength="56.0" lengthAdjust="spacingAndGlyphs" transform="translate(925.0 651.4) scale(1 1.28)">стия равен 11 мм.</text>
<rect x="1175" y="318" width="236" height="366" fill="none" stroke="#0a72ff" stroke-width="2"/>
<line x1="1159.71" y1="499.00" x2="1175.02" y2="499.00" stroke="#0a72ff" stroke-width="2"/>
<line x1="1160.00" y1="499.07" x2="1160.00" y2="684.12" stroke="#0a72ff" stroke-width="2"/>
<line x1="1159.71" y1="684.00" x2="1175.02" y2="684.00" stroke="#0a72ff" stroke-width="2"/>
<line x1="1166.00" y1="499.07" x2="1166.00" y2="684.12" stroke="#0a72ff" stroke-width="2"/>
<line x1="1159.71" y1="544.00" x2="1175.02" y2="544.00" stroke="#0a72ff" stroke-width="2"/>
<text x="0" y="0" font-size="4.22" text-anchor="middle" textLength="27.7" lengthAdjust="spacingAndGlyphs" fill="#000" transform="translate(1165.5 521.4) rotate(-90) scale(1 1.28)">Подп. и дата</text>
<line x1="1159.71" y1="576.00" x2="1175.02" y2="576.00" stroke="#0a72ff" stroke-width="2"/>
<text x="0" y="0" font-size="4.22" text-anchor="middle" textLength="19.8" lengthAdjust="spacingAndGlyphs" fill="#000" transform="translate(1165.5 559.7) rotate(-90) scale(1 1.28)">Инв. № дубл.</text>
<line x1="1159.71" y1="608.00" x2="1175.02" y2="608.00" stroke="#0a72ff" stroke-width="2"/>
<text x="0" y="0" font-size="4.22" text-anchor="middle" textLength="19.8" lengthAdjust="spacingAndGlyphs" fill="#000" transform="translate(1165.5 591.6) rotate(-90) scale(1 1.28)">Взам. инв. №</text>
<line x1="1159.71" y1="652.00" x2="1175.02" y2="652.00" stroke="#0a72ff" stroke-width="2"/>
<text x="0" y="0" font-size="4.22" text-anchor="middle" textLength="27.7" lengthAdjust="spacingAndGlyphs" fill="#000" transform="translate(1165.5 629.9) rotate(-90) scale(1 1.28)">Подп. и дата</text>
<text x="0" y="0" font-size="4.22" text-anchor="middle" textLength="19.8" lengthAdjust="spacingAndGlyphs" fill="#000" transform="translate(1165.5 668.2) rotate(-90) scale(1 1.28)">Инв. № подл.</text>
<line x1="1175.02" y1="665.00" x2="1411.12" y2="665.00" stroke="#0a72ff" stroke-width="2"/>
<line x1="1184.00" y1="664.98" x2="1184.00" y2="684.12" stroke="#0a72ff" stroke-width="2"/>
<line x1="1197.00" y1="664.98" x2="1197.00" y2="684.12" stroke="#0a72ff" stroke-width="2"/>
<line x1="1226.00" y1="664.98" x2="1226.00" y2="684.12" stroke="#0a72ff" stroke-width="2"/>
<line x1="1245.00" y1="664.98" x2="1245.00" y2="684.12" stroke="#0a72ff" stroke-width="2"/>
<line x1="1258.00" y1="664.98" x2="1258.00" y2="684.12" stroke="#0a72ff" stroke-width="2"/>
<line x1="1175.02" y1="671.50" x2="1257.98" y2="671.50" stroke="#000" stroke-width="1"/>
<line x1="1175.02" y1="678.00" x2="1257.98" y2="678.00" stroke="#0a72ff" stroke-width="2"/>
<line x1="1398.00" y1="664.98" x2="1398.00" y2="684.12" stroke="#0a72ff" stroke-width="2"/>
<line x1="1398.36" y1="674.00" x2="1411.12" y2="674.00" stroke="#0a72ff" stroke-width="2"/>
<text x="0" y="0" font-size="3.28" text-anchor="middle" textLength="7.1" lengthAdjust="spacingAndGlyphs" fill="#000" transform="translate(1179.5 682.8) scale(1 1.28)">Изм.</text>
<text x="0" y="0" font-size="3.28" text-anchor="middle" textLength="10.2" lengthAdjust="spacingAndGlyphs" fill="#000" transform="translate(1190.3 682.8) scale(1 1.28)">Лист</text>
<text x="0" y="0" font-size="3.28" text-anchor="middle" textLength="23.5" lengthAdjust="spacingAndGlyphs" fill="#000" transform="translate(1211.4 682.8) scale(1 1.28)">№ докум.</text>
<text x="0" y="0" font-size="3.28" text-anchor="middle" textLength="15.3" lengthAdjust="spacingAndGlyphs" fill="#000" transform="translate(1235.6 682.8) scale(1 1.28)">Подп.</text>
<text x="0" y="0" font-size="3.28" text-anchor="middle" textLength="10.2" lengthAdjust="spacingAndGlyphs" fill="#000" transform="translate(1251.6 682.8) scale(1 1.28)">Дата</text>
<text x="0" y="0" font-size="7.97" text-anchor="start" textLength="79.5" lengthAdjust="spacingAndGlyphs" transform="translate(1287.0 677.5) scale(1 1.28)">3112 014 000.000</text>
<text x="0" y="0" font-size="3.28" text-anchor="middle" textLength="8.0" lengthAdjust="spacingAndGlyphs" fill="#000" transform="translate(1404.7 671.5) scale(1 1.28)">Лист</text>
<text x="0" y="0" font-size="3.91" text-anchor="middle" fill="#000" transform="translate(1404.7 681.6) scale(1 1.28)">4</text>
<text x="0" y="0" font-size="3.59" text-anchor="start" textLength="22.0" lengthAdjust="spacingAndGlyphs" fill="#000" transform="translate(1271.0 689.5) scale(1 1.28)">Копировал</text>
<text x="0" y="0" font-size="3.59" text-anchor="start" textLength="16.0" lengthAdjust="spacingAndGlyphs" fill="#000" transform="translate(1361.0 689.5) scale(1 1.28)">Формат</text>
<text x="0" y="0" font-size="3.59" text-anchor="start" textLength="6.0" lengthAdjust="spacingAndGlyphs" fill="#000" transform="translate(1389.0 689.5) scale(1 1.28)">А4</text>
<text x="0" y="0" font-size="6.41" text-anchor="start" textLength="189.0" lengthAdjust="spacingAndGlyphs" transform="translate(1202.0 333.7) scale(1 1.28)">В детали "Корпус сборный" – отверстие резьбовое сквозное</text>
<text x="0" y="0" font-size="6.41" text-anchor="start" textLength="94.0" lengthAdjust="spacingAndGlyphs" transform="translate(1189.0 346.9) scale(1 1.28)">т.к. толщина детали невелика</text>
<text x="0" y="0" font-size="6.41" text-anchor="start" textLength="98.0" lengthAdjust="spacingAndGlyphs" transform="translate(1189.0 358.9) scale(1 1.28)">Состав шпилечного соединения:</text>
<text x="0" y="0" font-size="6.41" text-anchor="start" textLength="108.0" lengthAdjust="spacingAndGlyphs" transform="translate(1189.0 371.9) scale(1 1.28)">Шпилька М10х22.58 ГОСТ 22032-76</text>
<text x="0" y="0" font-size="6.41" text-anchor="start" textLength="84.0" lengthAdjust="spacingAndGlyphs" transform="translate(1189.0 384.9) scale(1 1.28)">Гайка 2М10.5 ГОСТ 5915-70</text>
<text x="0" y="0" font-size="6.41" text-anchor="start" textLength="82.0" lengthAdjust="spacingAndGlyphs" transform="translate(1189.0 397.9) scale(1 1.28)">Шайба 10.01 ГОСТ 11371-78</text>
<rect x="1443" y="318" width="236" height="366" fill="none" stroke="#0a72ff" stroke-width="2"/>
<line x1="1427.71" y1="499.00" x2="1443.02" y2="499.00" stroke="#0a72ff" stroke-width="2"/>
<line x1="1428.00" y1="499.07" x2="1428.00" y2="684.12" stroke="#0a72ff" stroke-width="2"/>
<line x1="1427.71" y1="684.00" x2="1443.02" y2="684.00" stroke="#0a72ff" stroke-width="2"/>
<line x1="1434.00" y1="499.07" x2="1434.00" y2="684.12" stroke="#0a72ff" stroke-width="2"/>
<line x1="1427.71" y1="544.00" x2="1443.02" y2="544.00" stroke="#0a72ff" stroke-width="2"/>
<text x="0" y="0" font-size="4.22" text-anchor="middle" textLength="27.7" lengthAdjust="spacingAndGlyphs" fill="#000" transform="translate(1433.5 521.4) rotate(-90) scale(1 1.28)">Подп. и дата</text>
<line x1="1427.71" y1="576.00" x2="1443.02" y2="576.00" stroke="#0a72ff" stroke-width="2"/>
<text x="0" y="0" font-size="4.22" text-anchor="middle" textLength="19.8" lengthAdjust="spacingAndGlyphs" fill="#000" transform="translate(1433.5 559.7) rotate(-90) scale(1 1.28)">Инв. № дубл.</text>
<line x1="1427.71" y1="608.00" x2="1443.02" y2="608.00" stroke="#0a72ff" stroke-width="2"/>
<text x="0" y="0" font-size="4.22" text-anchor="middle" textLength="19.8" lengthAdjust="spacingAndGlyphs" fill="#000" transform="translate(1433.5 591.6) rotate(-90) scale(1 1.28)">Взам. инв. №</text>
<line x1="1427.71" y1="652.00" x2="1443.02" y2="652.00" stroke="#0a72ff" stroke-width="2"/>
<text x="0" y="0" font-size="4.22" text-anchor="middle" textLength="27.7" lengthAdjust="spacingAndGlyphs" fill="#000" transform="translate(1433.5 629.9) rotate(-90) scale(1 1.28)">Подп. и дата</text>
<text x="0" y="0" font-size="4.22" text-anchor="middle" textLength="19.8" lengthAdjust="spacingAndGlyphs" fill="#000" transform="translate(1433.5 668.2) rotate(-90) scale(1 1.28)">Инв. № подл.</text>
<line x1="1443.02" y1="665.00" x2="1679.12" y2="665.00" stroke="#0a72ff" stroke-width="2"/>
<line x1="1452.00" y1="664.98" x2="1452.00" y2="684.12" stroke="#0a72ff" stroke-width="2"/>
<line x1="1465.00" y1="664.98" x2="1465.00" y2="684.12" stroke="#0a72ff" stroke-width="2"/>
<line x1="1494.00" y1="664.98" x2="1494.00" y2="684.12" stroke="#0a72ff" stroke-width="2"/>
<line x1="1513.00" y1="664.98" x2="1513.00" y2="684.12" stroke="#0a72ff" stroke-width="2"/>
<line x1="1526.00" y1="664.98" x2="1526.00" y2="684.12" stroke="#0a72ff" stroke-width="2"/>
<line x1="1443.02" y1="671.50" x2="1525.98" y2="671.50" stroke="#000" stroke-width="1"/>
<line x1="1443.02" y1="678.00" x2="1525.98" y2="678.00" stroke="#0a72ff" stroke-width="2"/>
<line x1="1666.00" y1="664.98" x2="1666.00" y2="684.12" stroke="#0a72ff" stroke-width="2"/>
<line x1="1666.36" y1="674.00" x2="1679.12" y2="674.00" stroke="#0a72ff" stroke-width="2"/>
<text x="0" y="0" font-size="3.28" text-anchor="middle" textLength="7.1" lengthAdjust="spacingAndGlyphs" fill="#000" transform="translate(1447.5 682.8) scale(1 1.28)">Изм.</text>
<text x="0" y="0" font-size="3.28" text-anchor="middle" textLength="10.2" lengthAdjust="spacingAndGlyphs" fill="#000" transform="translate(1458.3 682.8) scale(1 1.28)">Лист</text>
<text x="0" y="0" font-size="3.28" text-anchor="middle" textLength="23.5" lengthAdjust="spacingAndGlyphs" fill="#000" transform="translate(1479.4 682.8) scale(1 1.28)">№ докум.</text>
<text x="0" y="0" font-size="3.28" text-anchor="middle" textLength="15.3" lengthAdjust="spacingAndGlyphs" fill="#000" transform="translate(1503.6 682.8) scale(1 1.28)">Подп.</text>
<text x="0" y="0" font-size="3.28" text-anchor="middle" textLength="10.2" lengthAdjust="spacingAndGlyphs" fill="#000" transform="translate(1519.6 682.8) scale(1 1.28)">Дата</text>
<text x="0" y="0" font-size="7.97" text-anchor="start" textLength="79.5" lengthAdjust="spacingAndGlyphs" transform="translate(1555.0 677.5) scale(1 1.28)">3112 014 000.000</text>
<text x="0" y="0" font-size="3.28" text-anchor="middle" textLength="8.0" lengthAdjust="spacingAndGlyphs" fill="#000" transform="translate(1672.7 671.5) scale(1 1.28)">Лист</text>
<text x="0" y="0" font-size="3.91" text-anchor="middle" fill="#000" transform="translate(1672.7 681.6) scale(1 1.28)">5</text>
<text x="0" y="0" font-size="3.59" text-anchor="start" textLength="22.0" lengthAdjust="spacingAndGlyphs" fill="#000" transform="translate(1539.0 689.5) scale(1 1.28)">Копировал</text>
<text x="0" y="0" font-size="3.59" text-anchor="start" textLength="16.0" lengthAdjust="spacingAndGlyphs" fill="#000" transform="translate(1629.0 689.5) scale(1 1.28)">Формат</text>
<text x="0" y="0" font-size="3.59" text-anchor="start" textLength="6.0" lengthAdjust="spacingAndGlyphs" fill="#000" transform="translate(1657.0 689.5) scale(1 1.28)">А4</text>
<text x="0" y="0" font-size="6.41" text-anchor="start" textLength="73.0" lengthAdjust="spacingAndGlyphs" transform="translate(1521.0 332.9) scale(1 1.28)">1.3 Винтовое соединение</text>
<text x="0" y="0" font-size="6.41" text-anchor="start" textLength="131.0" lengthAdjust="spacingAndGlyphs" transform="translate(1490.0 346.4) scale(1 1.28)">Длина винта рассчитывается по формуле:</text>
<text x="0" y="0" font-size="6.41" text-anchor="start" textLength="47.0" lengthAdjust="spacingAndGlyphs" transform="translate(1534.0 358.9) scale(1 1.28)">lв= Ф + 1,5d – K</text>
<text x="0" y="0" font-size="6.41" text-anchor="start" textLength="157.0" lengthAdjust="spacingAndGlyphs" transform="translate(1458.0 371.6) scale(1 1.28)">где Ф – толщина присоединяемой детали (фланца);</text>
<text x="0" y="0" font-size="6.41" text-anchor="start" textLength="82.0" lengthAdjust="spacingAndGlyphs" transform="translate(1472.0 384.4) scale(1 1.28)">K – высота головки винта;</text>
<text x="0" y="0" font-size="6.41" text-anchor="start" textLength="101.0" lengthAdjust="spacingAndGlyphs" transform="translate(1472.0 397.4) scale(1 1.28)">d – номинальный диаметр резьбы;</text>
<text x="0" y="0" font-size="6.41" text-anchor="start" textLength="163.0" lengthAdjust="spacingAndGlyphs" transform="translate(1472.0 409.9) scale(1 1.28)">1,5d – рекомендуемая глубина ввинчивания для стали.</text>
<text x="0" y="0" font-size="6.41" text-anchor="start" textLength="193.0" lengthAdjust="spacingAndGlyphs" transform="translate(1458.0 435.6) scale(1 1.28)">Номинальный диаметр винта 5 мм. Шаг крупный, равный 0,8 мм.</text>
<text x="0" y="0" font-size="6.41" text-anchor="start" textLength="172.0" lengthAdjust="spacingAndGlyphs" transform="translate(1472.0 448.4) scale(1 1.28)">Высота головки винта в соответствии с ГОСТ 1491-80</text>
<text x="0" y="0" font-size="6.41" text-anchor="start" textLength="61.0" lengthAdjust="spacingAndGlyphs" transform="translate(1458.0 461.4) scale(1 1.28)">равняется K=3,5 мм</text>
<text x="0" y="0" font-size="6.41" text-anchor="start" textLength="107.0" lengthAdjust="spacingAndGlyphs" transform="translate(1458.0 486.4) scale(1 1.28)">Расчетная длина винта равняется</text>
<text x="0" y="0" font-size="6.41" text-anchor="start" textLength="81.0" lengthAdjust="spacingAndGlyphs" transform="translate(1516.0 499.4) scale(1 1.28)">lв= 12 + 1,5·5 – 3,5 = 16 мм</text>
<text x="0" y="0" font-size="6.41" text-anchor="start" textLength="190.0" lengthAdjust="spacingAndGlyphs" transform="translate(1458.0 511.9) scale(1 1.28)">Принимаем по ГОСТ 1491-80 длину винта 16 мм. Длина резьбы</text>
<text x="0" y="0" font-size="6.41" text-anchor="start" textLength="27.0" lengthAdjust="spacingAndGlyphs" transform="translate(1458.0 524.9) scale(1 1.28)">lв=16 мм</text>
<text x="0" y="0" font-size="6.41" text-anchor="start" textLength="94.0" lengthAdjust="spacingAndGlyphs" transform="translate(1458.0 537.4) scale(1 1.28)">Состав винтового соединения:</text>
<text x="0" y="0" font-size="6.41" text-anchor="start" textLength="89.0" lengthAdjust="spacingAndGlyphs" transform="translate(1458.0 550.4) scale(1 1.28)">Винт М5х16.58 ГОСТ 1491-80</text>
<text x="0" y="0" font-size="6.41" text-anchor="start" textLength="167.0" lengthAdjust="spacingAndGlyphs" transform="translate(1458.0 562.9) scale(1 1.28)">Размеры отверстий под винт в соединяемых деталях:</text>
<text x="0" y="0" font-size="6.41" text-anchor="start" textLength="179.0" lengthAdjust="spacingAndGlyphs" transform="translate(1472.0 575.9) scale(1 1.28)">В детали "Корпус сборный" – глухое резьбовое отверстие.</text>
<text x="0" y="0" font-size="6.41" text-anchor="start" textLength="156.0" lengthAdjust="spacingAndGlyphs" transform="translate(1472.0 588.9) scale(1 1.28)">Глубина отверстия равна 1,5d+6p=1,5·5+6·0,8=12 мм</text>
<text x="0" y="0" font-size="6.41" text-anchor="start" textLength="180.0" lengthAdjust="spacingAndGlyphs" transform="translate(1458.0 601.4) scale(1 1.28)">Здесь p – это величина шага p=0,8 мм. Глубина нарезания</text>
<text x="0" y="0" font-size="6.41" text-anchor="start" textLength="117.0" lengthAdjust="spacingAndGlyphs" transform="translate(1458.0 613.9) scale(1 1.28)">резьбы равна 1,5d+4p=1,5·5+4·0,8=11 мм</text>
<rect x="1711" y="318" width="236" height="366" fill="none" stroke="#0a72ff" stroke-width="2"/>
<line x1="1695.71" y1="499.00" x2="1711.02" y2="499.00" stroke="#0a72ff" stroke-width="2"/>
<line x1="1696.00" y1="499.07" x2="1696.00" y2="684.12" stroke="#0a72ff" stroke-width="2"/>
<line x1="1695.71" y1="684.00" x2="1711.02" y2="684.00" stroke="#0a72ff" stroke-width="2"/>
<line x1="1702.00" y1="499.07" x2="1702.00" y2="684.12" stroke="#0a72ff" stroke-width="2"/>
<line x1="1695.71" y1="544.00" x2="1711.02" y2="544.00" stroke="#0a72ff" stroke-width="2"/>
<text x="0" y="0" font-size="4.22" text-anchor="middle" textLength="27.7" lengthAdjust="spacingAndGlyphs" fill="#000" transform="translate(1701.5 521.4) rotate(-90) scale(1 1.28)">Подп. и дата</text>
<line x1="1695.71" y1="576.00" x2="1711.02" y2="576.00" stroke="#0a72ff" stroke-width="2"/>
<text x="0" y="0" font-size="4.22" text-anchor="middle" textLength="19.8" lengthAdjust="spacingAndGlyphs" fill="#000" transform="translate(1701.5 559.7) rotate(-90) scale(1 1.28)">Инв. № дубл.</text>
<line x1="1695.71" y1="608.00" x2="1711.02" y2="608.00" stroke="#0a72ff" stroke-width="2"/>
<text x="0" y="0" font-size="4.22" text-anchor="middle" textLength="19.8" lengthAdjust="spacingAndGlyphs" fill="#000" transform="translate(1701.5 591.6) rotate(-90) scale(1 1.28)">Взам. инв. №</text>
<line x1="1695.71" y1="652.00" x2="1711.02" y2="652.00" stroke="#0a72ff" stroke-width="2"/>
<text x="0" y="0" font-size="4.22" text-anchor="middle" textLength="27.7" lengthAdjust="spacingAndGlyphs" fill="#000" transform="translate(1701.5 629.9) rotate(-90) scale(1 1.28)">Подп. и дата</text>
<text x="0" y="0" font-size="4.22" text-anchor="middle" textLength="19.8" lengthAdjust="spacingAndGlyphs" fill="#000" transform="translate(1701.5 668.2) rotate(-90) scale(1 1.28)">Инв. № подл.</text>
<line x1="1711.02" y1="665.00" x2="1947.12" y2="665.00" stroke="#0a72ff" stroke-width="2"/>
<line x1="1720.00" y1="664.98" x2="1720.00" y2="684.12" stroke="#0a72ff" stroke-width="2"/>
<line x1="1733.00" y1="664.98" x2="1733.00" y2="684.12" stroke="#0a72ff" stroke-width="2"/>
<line x1="1762.00" y1="664.98" x2="1762.00" y2="684.12" stroke="#0a72ff" stroke-width="2"/>
<line x1="1781.00" y1="664.98" x2="1781.00" y2="684.12" stroke="#0a72ff" stroke-width="2"/>
<line x1="1794.00" y1="664.98" x2="1794.00" y2="684.12" stroke="#0a72ff" stroke-width="2"/>
<line x1="1711.02" y1="671.50" x2="1793.98" y2="671.50" stroke="#000" stroke-width="1"/>
<line x1="1711.02" y1="678.00" x2="1793.98" y2="678.00" stroke="#0a72ff" stroke-width="2"/>
<line x1="1934.00" y1="664.98" x2="1934.00" y2="684.12" stroke="#0a72ff" stroke-width="2"/>
<line x1="1934.36" y1="674.00" x2="1947.12" y2="674.00" stroke="#0a72ff" stroke-width="2"/>
<text x="0" y="0" font-size="3.28" text-anchor="middle" textLength="7.1" lengthAdjust="spacingAndGlyphs" fill="#000" transform="translate(1715.5 682.8) scale(1 1.28)">Изм.</text>
<text x="0" y="0" font-size="3.28" text-anchor="middle" textLength="10.2" lengthAdjust="spacingAndGlyphs" fill="#000" transform="translate(1726.3 682.8) scale(1 1.28)">Лист</text>
<text x="0" y="0" font-size="3.28" text-anchor="middle" textLength="23.5" lengthAdjust="spacingAndGlyphs" fill="#000" transform="translate(1747.4 682.8) scale(1 1.28)">№ докум.</text>
<text x="0" y="0" font-size="3.28" text-anchor="middle" textLength="15.3" lengthAdjust="spacingAndGlyphs" fill="#000" transform="translate(1771.6 682.8) scale(1 1.28)">Подп.</text>
<text x="0" y="0" font-size="3.28" text-anchor="middle" textLength="10.2" lengthAdjust="spacingAndGlyphs" fill="#000" transform="translate(1787.6 682.8) scale(1 1.28)">Дата</text>
<text x="0" y="0" font-size="7.97" text-anchor="start" textLength="79.5" lengthAdjust="spacingAndGlyphs" transform="translate(1823.0 677.5) scale(1 1.28)">3112 014 000.000</text>
<text x="0" y="0" font-size="3.28" text-anchor="middle" textLength="8.0" lengthAdjust="spacingAndGlyphs" fill="#000" transform="translate(1940.7 671.5) scale(1 1.28)">Лист</text>
<text x="0" y="0" font-size="3.91" text-anchor="middle" fill="#000" transform="translate(1940.7 681.6) scale(1 1.28)">6</text>
<text x="0" y="0" font-size="3.59" text-anchor="start" textLength="22.0" lengthAdjust="spacingAndGlyphs" fill="#000" transform="translate(1807.0 689.5) scale(1 1.28)">Копировал</text>
<text x="0" y="0" font-size="3.59" text-anchor="start" textLength="16.0" lengthAdjust="spacingAndGlyphs" fill="#000" transform="translate(1897.0 689.5) scale(1 1.28)">Формат</text>
<text x="0" y="0" font-size="3.59" text-anchor="start" textLength="6.0" lengthAdjust="spacingAndGlyphs" fill="#000" transform="translate(1925.0 689.5) scale(1 1.28)">А4</text>
<text x="0" y="0" font-size="6.41" text-anchor="start" textLength="120.0" lengthAdjust="spacingAndGlyphs" transform="translate(1766.0 334.9) scale(1 1.28)">2. СОЗДАНИЕ ЧЕРТЕЖА СВАРНОГО УЗЛА</text>
<text x="0" y="0" font-size="6.41" text-anchor="start" textLength="179.0" lengthAdjust="spacingAndGlyphs" transform="translate(1731.0 347.9) scale(1 1.28)">Наименование сварного узла в задании – "Корпус сборный".</text>
<text x="0" y="0" font-size="6.41" text-anchor="start" textLength="217.0" lengthAdjust="spacingAndGlyphs" transform="translate(1718.0 360.9) scale(1 1.28)">Детали, из которых состоит сварной узел, – Основание (2 детали),</text>
<text x="0" y="0" font-size="6.41" text-anchor="start" textLength="217.0" lengthAdjust="spacingAndGlyphs" transform="translate(1718.0 373.9) scale(1 1.28)">Стойка левая, Стойка правая, Кольцо, Бобышка (2 детали), Крышка.</text>
<text x="0" y="0" font-size="6.41" text-anchor="start" textLength="217.0" lengthAdjust="spacingAndGlyphs" transform="translate(1718.0 386.4) scale(1 1.28)">По указанным в задании сварным швам определены контуры сварного</text>
<text x="0" y="0" font-size="6.41" text-anchor="start" textLength="195.0" lengthAdjust="spacingAndGlyphs" transform="translate(1718.0 399.4) scale(1 1.28)">узла на чертеже изделия. По приведенным в задании описаниям</text>
<text x="0" y="0" font-size="6.41" text-anchor="start" textLength="163.0" lengthAdjust="spacingAndGlyphs" transform="translate(1718.0 411.9) scale(1 1.28)">составлены стандартные обозначения сварных швов.</text>
<text x="0" y="0" font-size="6.41" text-anchor="start" textLength="187.0" lengthAdjust="spacingAndGlyphs" transform="translate(1731.0 424.9) scale(1 1.28)">Размеры проставлены габаритные и присоединительные. Вы-</text>
<text x="0" y="0" font-size="6.41" text-anchor="start" textLength="217.0" lengthAdjust="spacingAndGlyphs" transform="translate(1718.0 437.9) scale(1 1.28)">полнен сборочный чертеж сварного узла и спецификация, простав-</text>
<text x="0" y="0" font-size="6.41" text-anchor="start" textLength="98.0" lengthAdjust="spacingAndGlyphs" transform="translate(1718.0 450.4) scale(1 1.28)">лены позиции, см. Приложение 2.</text>
<text x="0" y="0" font-size="6.41" text-anchor="start" textLength="138.0" lengthAdjust="spacingAndGlyphs" transform="translate(1758.0 475.9) scale(1 1.28)">3. СОЗДАНИЕ СБОРОЧНОГО ЧЕРТЕЖА ИЗДЕЛИЯ</text>
<text x="0" y="0" font-size="6.41" text-anchor="start" textLength="186.0" lengthAdjust="spacingAndGlyphs" transform="translate(1731.0 488.4) scale(1 1.28)">Сборочный чертеж выполнен с учетом требований к данному</text>
<text x="0" y="0" font-size="6.41" text-anchor="start" textLength="212.0" lengthAdjust="spacingAndGlyphs" transform="translate(1718.0 501.4) scale(1 1.28)">типу чертежей: размеры выполнены габаритные и присоединитель-</text>
<text x="0" y="0" font-size="6.41" text-anchor="start" textLength="212.0" lengthAdjust="spacingAndGlyphs" transform="translate(1718.0 513.9) scale(1 1.28)">ные, составлена спецификация. После составления спецификации</text>
<text x="0" y="0" font-size="6.41" text-anchor="start" textLength="68.0" lengthAdjust="spacingAndGlyphs" transform="translate(1718.0 526.9) scale(1 1.28)">проставлены позиции.</text>
<g stroke="#000" stroke-width="1" fill="none" font-style="normal">
<path d="M1032.5 352 V380.5 H1060"/>
<path d="M1030 356 L1032.5 347 L1035 356 Z"/>
<rect x="1059.5" y="378" width="6" height="4"/>
<path d="M1029 335 L1033.5 341 L1038 335 M1033.5 341 V346"/>
<path d="M1066 372 L1075 382 M1075 372 L1066 382"/>
</g>
</g></svg>
<div class="r" style="left:848px;top:145px;width:694px;height:26px;background:#f0f0f0;border:1px solid #6a6a6a;border-top:none"></div>
<div class="r" style="left:849px;top:145px;width:15px;height:25px;background:#e0e0e0;"></div>
<svg class="i" style="left:851px;top:150px;" width="11" height="5" viewBox="0 0 11 5" fill="none" stroke="#1e1e1e" stroke-width="1.2"><g fill="#333" stroke="none"><rect x="0" y="0" width="2" height="2"/><rect x="3" y="0" width="2" height="2"/><rect x="6" y="0" width="2" height="2"/><rect x="9" y="0" width="2" height="2"/><rect x="0" y="3" width="2" height="2"/><rect x="3" y="3" width="2" height="2"/><rect x="6" y="3" width="2" height="2"/><rect x="9" y="3" width="2" height="2"/></g></svg>
<div class="r" style="left:864px;top:145px;width:47px;height:25px;background:#4a4a4a;"></div>
<svg class="i" style="left:868px;top:149px;" width="19" height="19" viewBox="0 0 19 19" fill="none" stroke="#1e1e1e" stroke-width="1.2"><path d="M4 14 L11 5 C13 2.5 17 4.5 15 8 L8 17" stroke="#fff" stroke-width="3.2" fill="none"/><path d="M4 14 L11 5 C13 2.5 17 4.5 15 8 L8 17" stroke="#4a4a4a" stroke-width="1.2" fill="none"/></svg>
<svg class="i" style="left:896px;top:155px;" width="10" height="5" viewBox="0 0 10 5" fill="none" stroke="#1e1e1e" stroke-width="1.2"><path d="M0 0 H10 L5 5 Z" fill="#fff" stroke="none"/></svg>
<div class="r" style="left:911px;top:145px;width:2px;height:25px;background:#555;"></div>
<svg class="i" style="left:919px;top:149px;" width="16" height="17" viewBox="0 0 16 17" fill="none" stroke="#1e1e1e" stroke-width="1.2"><path d="M1 9 L9 1 M3 12 L12 3 M10 10 V16 M6 16 H15" stroke-width="1.1"/></svg>
<svg class="i" style="left:945px;top:149px;" width="16" height="17" viewBox="0 0 16 17" fill="none" stroke="#1e1e1e" stroke-width="1.2"><path d="M0.5 14 L8 6 M2.5 16 L9 9 M9 11 V16 M5 16 H13" stroke-width="1"/><path d="M6 4 C8 0 13 0 15 4 C13 8 8 8 6 4 Z" fill="#1e1e1e" stroke="none"/><circle cx="10.5" cy="4" r="1.2" fill="#f0f0f0" stroke="none"/></svg>
<svg class="i" style="left:974px;top:149px;" width="16" height="17" viewBox="0 0 16 17" fill="none" stroke="#1e1e1e" stroke-width="1.2"><path d="M3 9 V15 H9 M1.5 10.5 L3 8.5 L4.5 10.5 M7.5 13.5 L9 15 L7.5 16.5" stroke-width="1"/><path d="M6 4 C8 0 13 0 15 4 C13 8 8 8 6 4 Z" fill="#1e1e1e" stroke="none"/><circle cx="10.5" cy="4" r="1.2" fill="#f0f0f0" stroke="none"/></svg>
<div class="r" style="left:995px;top:145px;width:1px;height:25px;background:#777;"></div>
<svg class="i" style="left:1000px;top:150px;" width="16" height="16" viewBox="0 0 16 16" fill="none" stroke="#1e1e1e" stroke-width="1.2"><path d="M3 0 V16 M8 0 V16 M13 0 V16 M0 3 H16 M0 8 H16 M0 13 H16" stroke-width="1.3"/></svg>
<svg class="i" style="left:1028px;top:155px;" width="10" height="5" viewBox="0 0 10 5" fill="none" stroke="#1e1e1e" stroke-width="1.2"><path d="M0 0 H10 L5 5 Z" fill="#1e1e1e" stroke="none"/></svg>
<div class="r" style="left:1045px;top:145px;width:80px;height:25px;background:#fafafa;"></div>
<svg class="i" style="left:1046px;top:148px;" width="18" height="19" viewBox="0 0 18 19" fill="none" stroke="#1e1e1e" stroke-width="1.2"><path d="M4 3 V16 H16 M2 6 L4 2 L6 6 M13 14 L17 16 L13 18" stroke-width="1.1"/><circle cx="4" cy="16" r="1.8" fill="#fff"/></svg>
<div class="t" style="left:1065px;top:150px;font-size:12px;color:#222;font-weight:normal;">СК 0</div>
<svg class="i" style="left:1110px;top:155px;" width="10" height="5" viewBox="0 0 10 5" fill="none" stroke="#1e1e1e" stroke-width="1.2"><path d="M0 0 H10 L5 5 Z" fill="#1e1e1e" stroke="none"/></svg>
<svg class="i" style="left:1131px;top:149px;" width="16" height="17" viewBox="0 0 16 17" fill="none" stroke="#1e1e1e" stroke-width="1.2"><path d="M1 16 H7 V1 H15" stroke-width="1.3"/></svg>
<div class="r" style="left:1153px;top:145px;width:26px;height:25px;background:#4a4a4a;"></div>
<svg class="i" style="left:1157px;top:149px;" width="17" height="17" viewBox="0 0 17 17" fill="none" stroke="#1e1e1e" stroke-width="1.2"><path d="M3 13 L14 4" stroke="#fff" stroke-width="1"/><g fill="#4a4a4a" stroke="#fff" stroke-width="1"><circle cx="3" cy="13" r="2"/><circle cx="14" cy="4" r="2"/><path d="M5 3 L6.5 1.5 L8 3 L6.5 4.5 Z"/><path d="M11 13 L12.5 11.5 L14 13 L12.5 14.5 Z"/></g></svg>
<div class="r" style="left:1179px;top:145px;width:71px;height:25px;background:#fafafa;"></div>
<svg class="i" style="left:1182px;top:148px;" width="17" height="18" viewBox="0 0 17 18" fill="none" stroke="#1e1e1e" stroke-width="1.2"><path d="M3 4 V17 M13 4 V17 M3 15 H13 M11 13 L13 15 L11 17" stroke-width="1"/><path d="M1 3 L3 1 L5 3 L3 5 Z M11 3 L13 1 L15 3 L13 5 Z" fill="none" stroke-width="0.9"/></svg>
<div class="t" style="left:1204px;top:150px;font-size:12px;color:#222;font-weight:normal;">1</div>
<svg class="i" style="left:1234px;top:155px;" width="10" height="5" viewBox="0 0 10 5" fill="none" stroke="#1e1e1e" stroke-width="1.2"><path d="M0 0 H10 L5 5 Z" fill="#1e1e1e" stroke="none"/></svg>
<svg class="i" style="left:1255px;top:150px;" width="16" height="16" viewBox="0 0 16 16" fill="none" stroke="#1e1e1e" stroke-width="1.2"><circle cx="6.5" cy="6.5" r="5.2" stroke-width="1.4"/><path d="M10 10 L14 14" stroke-width="2"/><path d="M11 1 H16 V6" stroke-dasharray="1 1" stroke-width="1"/></svg>
<svg class="i" style="left:1283px;top:155px;" width="10" height="5" viewBox="0 0 10 5" fill="none" stroke="#1e1e1e" stroke-width="1.2"><path d="M0 0 H10 L5 5 Z" fill="#1e1e1e" stroke="none"/></svg>
<div class="r" style="left:1299px;top:145px;width:71px;height:25px;background:#fafafa;"></div>
<svg class="i" style="left:1300px;top:150px;" width="16" height="16" viewBox="0 0 16 16" fill="none" stroke="#1e1e1e" stroke-width="1.2"><circle cx="6.5" cy="6.5" r="5.2" stroke-width="1.4"/><path d="M10 10 L14.5 14.5" stroke-width="2"/><path d="M4 6.5 H9 M6.5 4 V9" stroke-width="1.2"/></svg>
<div class="t" style="left:1322px;top:150px;font-size:12px;color:#333;font-weight:normal;">0.337</div>
<svg class="i" style="left:1354px;top:155px;" width="10" height="5" viewBox="0 0 10 5" fill="none" stroke="#1e1e1e" stroke-width="1.2"><path d="M0 0 H10 L5 5 Z" fill="#1e1e1e" stroke="none"/></svg>
<div class="r" style="left:1370px;top:145px;width:13px;height:25px;background:#e0e0e0;"></div>
<div class="t" style="left:1372px;top:150px;font-size:12px;color:#333;font-weight:normal;">X</div>
<div class="r" style="left:1383px;top:145px;width:45px;height:25px;background:#fafafa;"></div>
<div class="t" style="left:1386px;top:150px;width:41px;overflow:hidden;font-size:12px;color:#333">-166.410</div>
<div class="r" style="left:1428px;top:145px;width:13px;height:25px;background:#e0e0e0;"></div>
<div class="t" style="left:1430px;top:150px;font-size:12px;color:#333;font-weight:normal;">Y</div>
<div class="r" style="left:1441px;top:145px;width:44px;height:25px;background:#fafafa;"></div>
<div class="t" style="left:1444px;top:150px;width:41px;overflow:hidden;font-size:12px;color:#333">-71.8732</div>
<svg class="i" style="left:1491px;top:149px;" width="18" height="17" viewBox="0 0 18 17" fill="none" stroke="#1e1e1e" stroke-width="1.2"><path d="M1 2 H17 M4 2 V15 M14 2 V15 M11 2 V15 M11 5 L14 8 M11 9 L14 12 M11 13 L14 15" stroke-width="1.2"/><rect x="1" y="10" width="6" height="6" fill="#f0f0f0"/><path d="M1 13 H7 M4 10 V16" stroke-width="0.9"/></svg>
<svg class="i" style="left:1518px;top:148px;" width="19" height="19" viewBox="0 0 19 19" fill="none" stroke="#1e1e1e" stroke-width="1.2"><path d="M2 17 L3 13.5 L10 6.5 L12 8.5 L5 15.5 Z" fill="#f0f0f0" stroke-width="1.1"/><path d="M9 5.5 L13 9.5" stroke-width="2"/><path d="M11 7.5 L15 3.5 C16 2.5 17.5 2.5 17.5 4 C17.5 5 16.5 5.5 15.5 6.5 L12.5 9 Z" fill="#1e1e1e" stroke="none"/></svg>
<div class="r" style="left:0px;top:1040px;width:1920px;height:8px;background:linear-gradient(90deg,#213239 0%,#1f2f38 50%,#1b2642 100%);"></div>
<div class="r" style="left:52px;top:1041px;width:46px;height:7px;background:#4e5a64;border:1px solid #7a858d"></div>
<div class="r" style="left:101px;top:1041px;width:46px;height:7px;background:#4e5a64;border:1px solid #7a858d"></div>
<div class="r" style="left:150px;top:1041px;width:46px;height:7px;background:#4e5a64;border:1px solid #7a858d"></div>
<div class="r" style="left:199px;top:1041px;width:46px;height:7px;background:#737d84;border:1px solid #d0d5d8"></div>
<div class="t" style="left:1814px;top:1043px;font-size:12px;color:#fff;font-weight:normal;">10:30</div>
</body></html>
